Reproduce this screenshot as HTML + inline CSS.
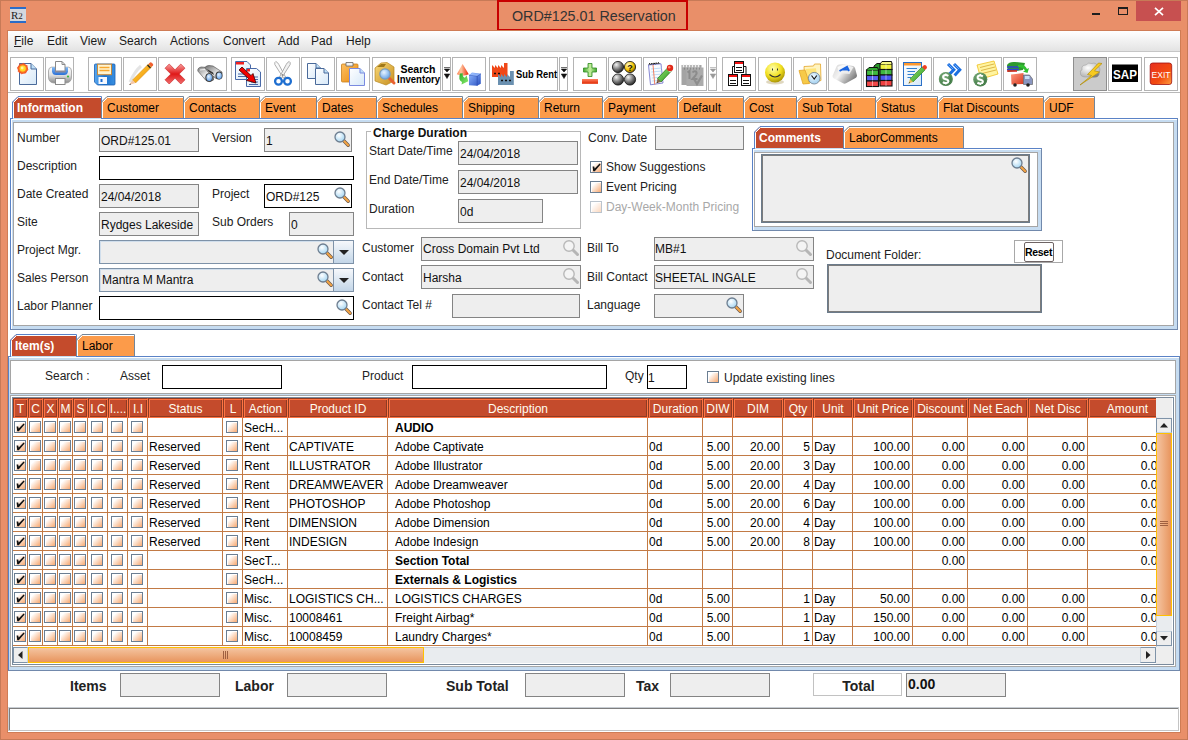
<!DOCTYPE html><html><head><meta charset="utf-8"><style>
*{margin:0;padding:0;box-sizing:border-box}
html,body{width:1188px;height:740px;overflow:hidden}
body{position:relative;background:#E98F69;font-family:"Liberation Sans", sans-serif;font-size:12px;color:#000}
div{position:absolute}
.t{position:absolute;white-space:nowrap;line-height:14px}
</style></head><body><div style="position:absolute;left:0px;top:0px;width:1188px;height:1px;background:#C77A57"></div>
<div style="position:absolute;left:0px;top:0px;width:1px;height:740px;background:#C77A57"></div>
<div style="position:absolute;left:1187px;top:0px;width:1px;height:740px;background:#C77A57"></div>
<div style="position:absolute;left:0px;top:739px;width:1188px;height:1px;background:#C77A57"></div>
<div style="position:absolute;left:497px;top:0px;width:191px;height:31px;border:2px solid #C80000"></div>
<div class="t" style="left:512px;top:8px;font-size:14.3px;color:#333;line-height:16px">ORD#125.01 Reservation</div>
<div style="position:absolute;left:10px;top:7px;width:16px;height:16px;background:#D4D8DE;border-top:2px solid #2A6CC8;border-bottom:2px solid #2A6CC8"><div class="t" style="left:1px;top:-1px;font-family:'Liberation Serif';font-size:11px;color:#222">R<span style="font-size:9px">2</span></div></div>
<div style="position:absolute;left:1092px;top:13px;width:8px;height:2px;background:#1E1E1E"></div>
<div style="position:absolute;left:1118px;top:7px;width:10px;height:8px;border:1px solid #1E1E1E;border-top-width:2px"></div>
<div style="position:absolute;left:1136px;top:1px;width:45px;height:20px;background:#C75050"></div>
<svg style="position:absolute;left:1154px;top:7px" width="10" height="9"><path d="M1 0.8L9 8.2M9 0.8L1 8.2" stroke="#fff" stroke-width="1.7"/></svg>
<div style="position:absolute;left:7px;top:30px;width:1174px;height:703px;border:1px solid #CF7C55;background:#fff"></div>
<div style="position:absolute;left:8px;top:31px;width:1172px;height:20px;background:linear-gradient(#FFFFFF,#E3E3E3)"></div>
<div style="position:absolute;left:8px;top:51px;width:1172px;height:1px;background:#C6C6C6"></div>
<div class="t" style="left:14px;top:34px;font-size:12px;color:#1a1a1a"><u>F</u>ile</div>
<div class="t" style="left:47px;top:34px;font-size:12px;color:#1a1a1a">Edit</div>
<div class="t" style="left:80px;top:34px;font-size:12px;color:#1a1a1a">View</div>
<div class="t" style="left:119px;top:34px;font-size:12px;color:#1a1a1a">Search</div>
<div class="t" style="left:170px;top:34px;font-size:12px;color:#1a1a1a">Actions</div>
<div class="t" style="left:223px;top:34px;font-size:12px;color:#1a1a1a">Convert</div>
<div class="t" style="left:278px;top:34px;font-size:12px;color:#1a1a1a">Add</div>
<div class="t" style="left:311px;top:34px;font-size:12px;color:#1a1a1a">Pad</div>
<div class="t" style="left:346px;top:34px;font-size:12px;color:#1a1a1a">Help</div>
<div style="position:absolute;left:8px;top:92px;width:1172px;height:1px;background:#B8B8B8"></div>
<svg width="0" height="0" style="position:absolute"><defs>
<linearGradient id="gPage" x1="0" y1="0" x2="1" y2="1"><stop offset="0" stop-color="#FFFFFF"/><stop offset="1" stop-color="#D6E8F8"/></linearGradient>
<radialGradient id="gBurst"><stop offset="0" stop-color="#FFF04A"/><stop offset="0.45" stop-color="#FFC21E"/><stop offset="0.75" stop-color="#F04020"/><stop offset="1" stop-color="#F04020" stop-opacity="0"/></radialGradient>
<linearGradient id="gPrinter" x1="0" y1="0" x2="0" y2="1"><stop offset="0" stop-color="#FFFFFF"/><stop offset="0.5" stop-color="#E0E0E0"/><stop offset="1" stop-color="#8A8A8A"/></linearGradient>
<linearGradient id="gBlue" x1="0" y1="0" x2="0" y2="1"><stop offset="0" stop-color="#7FB8F5"/><stop offset="1" stop-color="#2A6FD6"/></linearGradient>
<linearGradient id="gFloppy" x1="0" y1="0" x2="1" y2="0"><stop offset="0" stop-color="#58A8F0"/><stop offset="0.5" stop-color="#1A72D0"/><stop offset="1" stop-color="#3A90E0"/></linearGradient>
<linearGradient id="gRedX" x1="0" y1="0" x2="0" y2="1"><stop offset="0" stop-color="#F8A0A0"/><stop offset="0.5" stop-color="#E01818"/><stop offset="1" stop-color="#F07070"/></linearGradient>
<linearGradient id="gGray" x1="0" y1="0" x2="0" y2="1"><stop offset="0" stop-color="#9A9A9A"/><stop offset="0.5" stop-color="#5A5A5A"/><stop offset="1" stop-color="#3A3A3A"/></linearGradient>
<radialGradient id="gLens" cx="0.4" cy="0.35" r="0.7"><stop offset="0" stop-color="#E8F4FF"/><stop offset="1" stop-color="#5E9EE8"/></radialGradient>
<linearGradient id="gOrange" x1="0" y1="0" x2="1" y2="1"><stop offset="0" stop-color="#FFC060"/><stop offset="1" stop-color="#E88A10"/></linearGradient>
<linearGradient id="gBox" x1="0" y1="0" x2="1" y2="1"><stop offset="0" stop-color="#F8D878"/><stop offset="1" stop-color="#C89020"/></linearGradient>
<radialGradient id="gBall" cx="0.35" cy="0.3" r="0.75"><stop offset="0" stop-color="#F4F4F4"/><stop offset="0.6" stop-color="#707070"/><stop offset="1" stop-color="#202020"/></radialGradient>
<radialGradient id="gBallY" cx="0.35" cy="0.3" r="0.75"><stop offset="0" stop-color="#FFF8C0"/><stop offset="0.6" stop-color="#F5C400"/><stop offset="1" stop-color="#806000"/></radialGradient>
<radialGradient id="gSmile" cx="0.4" cy="0.3" r="0.75"><stop offset="0" stop-color="#FFFFB0"/><stop offset="0.55" stop-color="#F2E020"/><stop offset="1" stop-color="#A08A00"/></radialGradient>
<linearGradient id="gFolder" x1="0" y1="0" x2="1" y2="1"><stop offset="0" stop-color="#FFF2B8"/><stop offset="1" stop-color="#F2C040"/></linearGradient>
<linearGradient id="gKey" x1="0" y1="0" x2="0" y2="1"><stop offset="0" stop-color="#FFFFFF"/><stop offset="1" stop-color="#A8A8A8"/></linearGradient>
<radialGradient id="gCoin" cx="0.4" cy="0.35" r="0.7"><stop offset="0" stop-color="#7FB07F"/><stop offset="1" stop-color="#2F6A35"/></radialGradient>
<linearGradient id="gTruck" x1="0" y1="0" x2="1" y2="1"><stop offset="0" stop-color="#FF9A80"/><stop offset="1" stop-color="#D83A20"/></linearGradient>
<radialGradient id="gCloud" cx="0.4" cy="0.35" r="0.7"><stop offset="0" stop-color="#FFFFFF"/><stop offset="1" stop-color="#B0B0B0"/></radialGradient>
<linearGradient id="gExit" x1="0" y1="0" x2="1" y2="1"><stop offset="0" stop-color="#E83020"/><stop offset="0.6" stop-color="#F24A10"/><stop offset="1" stop-color="#FFA040"/></linearGradient>
<linearGradient id="gGreen" x1="0" y1="0" x2="1" y2="0"><stop offset="0" stop-color="#40A830"/><stop offset="0.5" stop-color="#C8F0A0"/><stop offset="1" stop-color="#40A830"/></linearGradient>
<linearGradient id="gMinus" x1="0" y1="0" x2="0" y2="1"><stop offset="0" stop-color="#FF8060"/><stop offset="1" stop-color="#E02800"/></linearGradient>
<linearGradient id="gCube" x1="0" y1="0" x2="1" y2="1"><stop offset="0" stop-color="#90B8FF"/><stop offset="1" stop-color="#2850C0"/></linearGradient>
<linearGradient id="gCone" x1="0" y1="0" x2="1" y2="1"><stop offset="0" stop-color="#FFB090"/><stop offset="1" stop-color="#E02800"/></linearGradient>
<linearGradient id="gPencil" x1="0" y1="0" x2="1" y2="1"><stop offset="0" stop-color="#FFD040"/><stop offset="1" stop-color="#F09000"/></linearGradient>
<linearGradient id="gGPencil" x1="0" y1="0" x2="1" y2="1"><stop offset="0" stop-color="#90E070"/><stop offset="1" stop-color="#2E9A20"/></linearGradient>
<linearGradient id="gBinoL" x1="0" y1="0" x2="1" y2="1"><stop offset="0" stop-color="#808080"/><stop offset="0.5" stop-color="#E8E8E8"/><stop offset="1" stop-color="#606060"/></linearGradient>
<linearGradient id="gBinoR" x1="0" y1="0" x2="1" y2="1"><stop offset="0" stop-color="#707070"/><stop offset="0.6" stop-color="#E0E0E0"/><stop offset="1" stop-color="#505050"/></linearGradient>
<radialGradient id="gClock" cx="0.4" cy="0.35" r="0.7"><stop offset="0" stop-color="#F0FAFF"/><stop offset="1" stop-color="#9CCCEE"/></radialGradient>
<linearGradient id="gKeyS" x1="0" y1="0" x2="1" y2="0.6"><stop offset="0" stop-color="#D0D0D0"/><stop offset="0.45" stop-color="#F4F4F4"/><stop offset="1" stop-color="#7A7A7A"/></linearGradient>
<linearGradient id="gKeyT" x1="0" y1="0" x2="1" y2="1"><stop offset="0" stop-color="#FFFFFF"/><stop offset="1" stop-color="#E4E4E4"/></linearGradient>
<radialGradient id="gBurst2"><stop offset="0" stop-color="#FFD820"/><stop offset="0.5" stop-color="#FF9A20"/><stop offset="1" stop-color="#F03A20" stop-opacity="0.75"/></radialGradient>
<linearGradient id="gCone2" x1="0" y1="0" x2="1" y2="0"><stop offset="0" stop-color="#FF8050"/><stop offset="0.35" stop-color="#FFC8A0"/><stop offset="1" stop-color="#E82000"/></linearGradient>
<linearGradient id="gArrow" x1="0" y1="0" x2="1" y2="1"><stop offset="0" stop-color="#28A828"/><stop offset="1" stop-color="#90F070"/></linearGradient>
</defs></svg>
<div style="position:absolute;left:10px;top:57px;width:34px;height:34px;background:#FFFFFF;border:1px solid #B4B4B4"></div>
<svg style="position:absolute;left:10px;top:57px" width="34" height="34" viewBox="0 0 34 34"><path d="M9.5 6.5H21L26.5 12V27.5H9.5Z" fill="url(#gPage)" stroke="#4A6A9A"/><path d="M21 6.5V12H26.5" fill="#BFE0F8" stroke="#4A6A9A"/><circle cx="12.7" cy="11.6" r="5.2" fill="#F04A28"/><polygon points="18.58,12.79 16.52,14.17 16.02,16.60 13.58,16.11 11.51,17.48 10.13,15.42 7.70,14.92 8.19,12.48 6.82,10.41 8.88,9.03 9.38,6.60 11.82,7.09 13.89,5.72 15.27,7.78 17.70,8.28 17.21,10.72" fill="url(#gBurst2)" opacity="0.85"/><circle cx="12.7" cy="11.6" r="3" fill="#FFD828"/><circle cx="12.2" cy="11" r="1.4" fill="#FFF6A0"/></svg>
<div style="position:absolute;left:45px;top:57px;width:29px;height:34px;background:#FFFFFF;border:1px solid #B4B4B4"></div>
<svg style="position:absolute;left:45px;top:57px" width="29" height="34" viewBox="0 0 29 34"><path d="M3.5 14 Q3.5 10.5 6.5 10.2 H23.5 Q26.5 10.5 26.5 14 V20 Q26.5 25.5 21 26 H9 Q3.5 25.5 3.5 20Z" fill="url(#gPrinter)" stroke="#9A9A9A" stroke-width="0.8"/><path d="M7 10.3 H23 V14.5 Q22.5 18 19 18 H11 Q7.5 18 7 14.5Z" fill="url(#gBlue)"/><path d="M10.5 4.5H17L20 7.5V14.5H10.5Z" fill="#fff" stroke="#8A8A8A"/><path d="M17 4.5V7.5H20" fill="none" stroke="#8A8A8A"/><rect x="10" y="13.5" width="10.5" height="2" fill="#8A8A9A"/><rect x="10.5" y="21.5" width="9.5" height="6" fill="#fff" stroke="#8A8A8A"/><circle cx="23" cy="19.5" r="1" fill="#2CB82C"/></svg>
<div style="position:absolute;left:88px;top:57px;width:34px;height:34px;background:#FFFFFF;border:1px solid #B4B4B4"></div>
<svg style="position:absolute;left:88px;top:57px" width="34" height="34" viewBox="0 0 34 34"><path d="M6.5 8Q6.5 7 7.5 7H26Q27 7 27 8V27Q27 28 26 28H9.5L6.5 25Z" fill="url(#gFloppy)" stroke="#1A5EB0" stroke-width="0.8"/><rect x="9.5" y="7.2" width="14" height="10.5" fill="#FFF4D0" stroke="#C88A3A"/><path d="M11.5 10.5H21.5M11.5 13.5H21.5" stroke="#F8A830" stroke-width="1.6"/><rect x="10.5" y="20" width="8.5" height="7" fill="#F4F8FF"/><rect x="12.5" y="22" width="2" height="3" fill="#1A6AD0"/></svg>
<div style="position:absolute;left:123px;top:57px;width:34px;height:34px;background:#FFFFFF;border:1px solid #B4B4B4"></div>
<svg style="position:absolute;left:123px;top:57px" width="34" height="34" viewBox="0 0 34 34"><path d="M7 25 Q12 14 18 9" stroke="#D8D8D8" stroke-width="3" fill="none" opacity="0.7"/><path d="M9.5 23 L25.5 7 L28.5 10 L12.5 26 Z" fill="url(#gPencil)" stroke="#D08000" stroke-width="0.5"/><path d="M9.5 23 L12.5 26 L6 28 Z" fill="#F4C8A8"/><path d="M6 28 L7.5 26.5 L8 27.5Z" fill="#333"/><path d="M25.5 7 L27 5.5 Q28 5 29 6 L30 7 Q30.5 8 30 8.5 L28.5 10Z" fill="#F06030"/><path d="M24.5 8 L27.5 11" stroke="#222" stroke-width="1.2"/></svg>
<div style="position:absolute;left:158px;top:57px;width:34px;height:34px;background:#FFFFFF;border:1px solid #B4B4B4"></div>
<svg style="position:absolute;left:158px;top:57px" width="34" height="34" viewBox="0 0 34 34"><path d="M7 11.2L11.2 7L17 12.8L22.8 7L27 11.2L21.2 17L27 22.8L22.8 27L17 21.2L11.2 27L7 22.8L12.8 17Z" fill="url(#gRedX)" stroke="#C82020" stroke-width="0.6"/></svg>
<div style="position:absolute;left:193px;top:57px;width:34px;height:34px;background:#FFFFFF;border:1px solid #B4B4B4"></div>
<svg style="position:absolute;left:193px;top:57px" width="34" height="34" viewBox="0 0 34 34"><path d="M4.8 14 Q4.5 10.5 8.5 10 L14 10.5 L21 16.5 L20.5 23 Q17 26 13 23.5 Z" fill="url(#gBinoL)" stroke="#444" stroke-width="0.6"/><path d="M12 10.5 Q13 8.5 16 8.5 L20 9 L29 15 L29 20.5 Q27 23 23 21.5 L15 15Z" fill="url(#gBinoR)" stroke="#444" stroke-width="0.6"/><path d="M14 12 L20 15.5 L21 18 L16 15Z" fill="#333"/><path d="M7 13 L12 12.5" stroke="#F0F0F0" stroke-width="1"/><ellipse cx="16" cy="20.5" rx="3.6" ry="4.3" fill="#333"/><ellipse cx="26" cy="18.6" rx="3.4" ry="4" fill="#333"/><ellipse cx="16.2" cy="20.6" rx="2.8" ry="3.5" fill="url(#gLens)"/><ellipse cx="26.2" cy="18.7" rx="2.6" ry="3.2" fill="url(#gLens)"/></svg>
<div style="position:absolute;left:231px;top:57px;width:34px;height:34px;background:#FFFFFF;border:1px solid #B4B4B4"></div>
<svg style="position:absolute;left:231px;top:57px" width="34" height="34" viewBox="0 0 34 34"><path d="M4.5 4.5H16L19.5 8V22.5H4.5Z" fill="url(#gPage)" stroke="#4A6AA8"/><rect x="5" y="5" width="8" height="2.5" fill="#F02020"/><path d="M7 17H16M7 19.5H16" stroke="#4A6AA8"/><path d="M15.5 11.5H25.5L29.5 15V29.5H15.5Z" fill="url(#gPage)" stroke="#4A6AA8"/><rect x="16" y="12" width="3" height="2.5" fill="#F02020"/><path d="M20 20H27M20 22.5H27M20 25H27M18 27.5H27" stroke="#4A6AA8"/><path d="M8 13 L11 10 L20 18.5 L22 16.5 L25 26 L15.5 23.5 L17.5 21.5Z" fill="#F00000" stroke="#300" stroke-width="0.8"/></svg>
<div style="position:absolute;left:266px;top:57px;width:34px;height:34px;background:#FFFFFF;border:1px solid #B4B4B4"></div>
<svg style="position:absolute;left:266px;top:57px" width="34" height="34" viewBox="0 0 34 34"><path d="M9.8 4.5 Q12 5.5 12.8 7.5 L19.5 20 L17.5 21.2 L8.8 7.5 Q8.4 5 9.8 4.5Z" fill="#FAFAFA" stroke="#A4A4A4" stroke-width="0.9" stroke-linejoin="round"/><path d="M23.2 4.5 Q21 5.5 20.2 7.5 L13.5 20 L15.5 21.2 L24.2 7.5 Q24.6 5 23.2 4.5Z" fill="#F2F2F2" stroke="#A4A4A4" stroke-width="0.9" stroke-linejoin="round"/><circle cx="16.5" cy="18" r="0.9" fill="#888"/><circle cx="12.5" cy="24.3" r="3.4" fill="none" stroke="#1E6ED0" stroke-width="2.3"/><circle cx="21.5" cy="24.3" r="3.4" fill="none" stroke="#1E6ED0" stroke-width="2.3"/></svg>
<div style="position:absolute;left:301px;top:57px;width:34px;height:34px;background:#FFFFFF;border:1px solid #B4B4B4"></div>
<svg style="position:absolute;left:301px;top:57px" width="34" height="34" viewBox="0 0 34 34"><path d="M6.5 6.5H15L19.5 11V21.5H6.5Z" fill="url(#gPage)" stroke="#4A6A9A"/><path d="M15 6.5V11H19.5" fill="#BFE0F8" stroke="#4A6A9A"/><path d="M14.5 11.5H23L27.5 16V27.5H14.5Z" fill="url(#gPage)" stroke="#4A6A9A"/><path d="M23 11.5V16H27.5" fill="#BFE0F8" stroke="#4A6A9A"/></svg>
<div style="position:absolute;left:336px;top:57px;width:34px;height:34px;background:#FFFFFF;border:1px solid #B4B4B4"></div>
<svg style="position:absolute;left:336px;top:57px" width="34" height="34" viewBox="0 0 34 34"><rect x="5.5" y="7" width="16.5" height="18" rx="1" fill="url(#gOrange)" stroke="#C88020" stroke-width="0.8"/><path d="M10 5.5H17V9H10Z" fill="#F2F2F2" stroke="#666" stroke-width="0.8"/><path d="M13.5 11.5H24L28.5 16V28.5H13.5Z" fill="url(#gPage)" stroke="#7A8AE0"/><path d="M24 11.5V16H28.5" fill="#BFE0F8" stroke="#7A8AE0"/></svg>
<div style="position:absolute;left:372px;top:57px;width:69px;height:34px;background:#FFFFFF;border:1px solid #B4B4B4"></div>
<svg style="position:absolute;left:372px;top:57px" width="69" height="34" viewBox="0 0 69 34"><path d="M3 11 L9 6 L15 5.5 L22 10 V24 L14 28 L3 24Z" fill="url(#gBox)" stroke="#B88820" stroke-width="0.7"/><path d="M5 10 L9 7 L14 7 L12 10Z" fill="#A07818"/><path d="M17 21 L22 26" stroke="#E86030" stroke-width="3" stroke-linecap="round"/><circle cx="13" cy="17" r="5.2" fill="url(#gLens)" stroke="#7C9CB8" stroke-width="1.2"/><text x="46" y="15.5" text-anchor="middle" font-family="Liberation Sans" font-weight="bold" font-size="10.5" fill="#000">Search</text><text x="46.5" y="25.6" text-anchor="middle" font-family="Liberation Sans" font-weight="bold" font-size="10.5" fill="#000" textLength="43" lengthAdjust="spacingAndGlyphs">Inventory</text></svg>
<div style="position:absolute;left:442px;top:57px;width:9px;height:34px;background:#FFFFFF;border:1px solid #B4B4B4"></div>
<svg style="position:absolute;left:442px;top:57px" width="9" height="34" viewBox="0 0 9 34"><path d="M2 10.5H8 M2.3 12H7.7L5 15Z M2.3 17H7.7L5 21.5Z" fill="#111" stroke="#111" stroke-width="0.6"/></svg>
<div style="position:absolute;left:452px;top:57px;width:34px;height:34px;background:#FFFFFF;border:1px solid #B4B4B4"></div>
<svg style="position:absolute;left:452px;top:57px" width="34" height="34" viewBox="0 0 34 34"><path d="M10.6 7 L16.8 17.3 Q10.8 20 4.8 17.3Z" fill="url(#gCone2)"/><path d="M8 16.5 Q5.8 23 10 25 L9.5 27.5 L16.3 24.3 L14.5 18.3 L13 20.8 Q10.2 20 10.8 16.2Z" fill="url(#gArrow)"/><path d="M17 18.2 L20 15.6 L28.8 16.8 L28.8 26.8 L25 28.8 L17 28.3Z" fill="url(#gCube)"/><path d="M17 18.2 L25.2 19 L28.8 16.8 M25.2 19 V28.8" stroke="#2A4AB0" stroke-width="0.7" fill="none"/><path d="M17.5 18.3 L20.2 16 L28.3 17 L25 18.9Z" fill="#9CC0FF" opacity="0.7"/></svg>
<div style="position:absolute;left:489px;top:57px;width:69px;height:34px;background:#FFFFFF;border:1px solid #B4B4B4"></div>
<svg style="position:absolute;left:489px;top:57px" width="69" height="34" viewBox="0 0 69 34"><path d="M3 20V8L6 11V8L9 11V8L12 11V8L15 11V6H18.5V20Z" fill="#F04818"/><path d="M9 28V17L12 20V17L15 20V17L18 20V17L21 20V14H24.8V28Z" fill="#6A90B0"/><path d="M12 23.5H14M16 23.5H18M20 23.5H22 M5 16.5H7M9 16.5H11" stroke="#111" stroke-width="1.6"/><text x="47.5" y="21" text-anchor="middle" font-family="Liberation Sans" font-weight="bold" font-size="10.5" fill="#000" textLength="41" lengthAdjust="spacingAndGlyphs">Sub Rent</text></svg>
<div style="position:absolute;left:559px;top:57px;width:9px;height:34px;background:#FFFFFF;border:1px solid #B4B4B4"></div>
<svg style="position:absolute;left:559px;top:57px" width="9" height="34" viewBox="0 0 9 34"><path d="M2 10.5H8 M2.3 12H7.7L5 15Z M2.3 17H7.7L5 21.5Z" fill="#111" stroke="#111" stroke-width="0.6"/></svg>
<div style="position:absolute;left:573px;top:57px;width:34px;height:34px;background:#FFFFFF;border:1px solid #B4B4B4"></div>
<svg style="position:absolute;left:573px;top:57px" width="34" height="34" viewBox="0 0 34 34"><path d="M15 6.5H19V11H23.5V15H19V19.5H15V15H10.5V11H15Z" fill="url(#gGreen)" stroke="#2E8A20" stroke-width="0.8"/><rect x="9" y="22" width="16" height="4.8" fill="url(#gMinus)"/></svg>
<div style="position:absolute;left:608px;top:57px;width:34px;height:34px;background:#FFFFFF;border:1px solid #B4B4B4"></div>
<svg style="position:absolute;left:608px;top:57px" width="34" height="34" viewBox="0 0 34 34"><circle cx="10" cy="10" r="5.6" fill="url(#gBall)" stroke="#111" stroke-width="0.8"/><circle cx="22" cy="10" r="5.6" fill="url(#gBallY)" stroke="#111" stroke-width="0.8"/><circle cx="10" cy="22.5" r="5.6" fill="url(#gBall)" stroke="#111" stroke-width="0.8"/><circle cx="22" cy="22.5" r="5.6" fill="url(#gBall)" stroke="#111" stroke-width="0.8"/><text x="22" y="13.5" text-anchor="middle" font-family="Liberation Sans" font-weight="bold" font-size="9" fill="#111">?</text></svg>
<div style="position:absolute;left:643px;top:57px;width:34px;height:34px;background:#FFFFFF;border:1px solid #B4B4B4"></div>
<svg style="position:absolute;left:643px;top:57px" width="34" height="34" viewBox="0 0 34 34"><path d="M5.5 8 L18 6.8 L20 26 L7.5 27.8Z" fill="#F8FBFF" stroke="#6A6AC8" stroke-width="0.8"/><path d="M8 12L19 11 M8.3 15L19.3 14 M8.6 18L19.6 17 M8.9 21L19.9 20 M9.2 24L20.2 23" stroke="#A8D0F0" stroke-width="0.7"/><path d="M10 8 L11.8 27.5" stroke="#F07050" stroke-width="0.9"/><path d="M6 7.8 Q6.5 5 7.5 7.5 M8.2 7.6 Q8.7 4.8 9.7 7.3 M10.4 7.4 Q10.9 4.6 11.9 7.1 M12.6 7.2 Q13.1 4.4 14.1 6.9 M14.8 7 Q15.3 4.2 16.3 6.7" stroke="#111" stroke-width="1" fill="none"/><path d="M14.5 21.5 L24.5 11 L28 14.5 L18 25 Z" fill="url(#gGPencil)" stroke="#1E6A10" stroke-width="0.7"/><path d="M14.5 21.5 L18 25 L13.5 26.2Z" fill="#8A6A50"/><path d="M13.5 26.2 L14.2 24.8 L14.9 25.6Z" fill="#222"/><path d="M24 11.5 L27.5 15" stroke="#F0F0F0" stroke-width="1.4"/><circle cx="27" cy="11" r="3.2" fill="#E02818"/><circle cx="26.2" cy="10.2" r="1.2" fill="#FF8A70"/></svg>
<div style="position:absolute;left:678px;top:57px;width:29px;height:34px;background:#FFFFFF;border:1px solid #B4B4B4"></div>
<svg style="position:absolute;left:678px;top:57px" width="29" height="34" viewBox="0 0 29 34"><rect x="3.5" y="8" width="20" height="20" fill="#A4A4A4"/><rect x="8.5" y="10.5" width="17" height="18.5" fill="#ABABAB"/><path d="M5.5 7.5V10.5 M8.5 7.5V10.5 M11.5 7.5V10.5 M14.5 7.5V10.5 M17.5 7.5V10.5 M20.5 7.5V10.5" stroke="#F0F0F0" stroke-width="1.6"/><path d="M6 10.5 Q7 12 6.5 12.5 M9 10.5 Q10 12 9.5 12.5 M12 10.5 Q13 12 12.5 12.5 M15 10.5 Q16 12 15.5 12.5 M18 10.5 Q19 12 18.5 12.5 M21 10.5 Q22 12 21.5 12.5" stroke="#7A7A7A" stroke-width="0.8" fill="none"/><path d="M9.5 15.5 L11.5 14 V22 M14.5 15.5 Q16 13.5 18 14.5 Q19.5 16 17.5 18.5 L14.5 22 H19.5" stroke="#8C8C8C" stroke-width="2" fill="none"/><path d="M15.5 21 L19 27 L24 18.5" stroke="#8E8E8E" stroke-width="2.2" fill="none"/></svg>
<div style="position:absolute;left:708px;top:57px;width:9px;height:34px;background:#FFFFFF;border:1px solid #B4B4B4"></div>
<svg style="position:absolute;left:708px;top:57px" width="9" height="34" viewBox="0 0 9 34"><path d="M2 10.5H8 M2.3 12H7.7L5 15Z M2.3 17H7.7L5 21.5Z" fill="#9A9A9A" stroke="#9A9A9A" stroke-width="0.6"/></svg>
<div style="position:absolute;left:722px;top:57px;width:34px;height:34px;background:#FFFFFF;border:1px solid #B4B4B4"></div>
<svg style="position:absolute;left:722px;top:57px" width="34" height="34" viewBox="0 0 34 34"><path d="M10.5 17V9.5H13 M24 17V9.5H21.5" stroke="#111" fill="none"/><rect x="12.5" y="4.5" width="9" height="11" fill="#fff" stroke="#111"/><rect x="13" y="5" width="8" height="2" fill="#F01010"/><path d="M14 10.5H20M14 13.5H20" stroke="#111" stroke-width="1.1"/><rect x="6.5" y="17.5" width="9" height="11" fill="#fff" stroke="#111"/><rect x="7" y="18" width="8" height="2" fill="#F01010"/><path d="M8 23.5H14M8 26.5H14" stroke="#111" stroke-width="1.1"/><rect x="19.5" y="17.5" width="9" height="11" fill="#fff" stroke="#111"/><rect x="20" y="18" width="8" height="2" fill="#F01010"/><path d="M21 23.5H27M21 26.5H27" stroke="#111" stroke-width="1.1"/></svg>
<div style="position:absolute;left:758px;top:57px;width:34px;height:34px;background:#FFFFFF;border:1px solid #B4B4B4"></div>
<svg style="position:absolute;left:758px;top:57px" width="34" height="34" viewBox="0 0 34 34"><ellipse cx="17" cy="25" rx="9" ry="2.5" fill="#C0B080" opacity="0.5"/><circle cx="17" cy="15.5" r="10" fill="url(#gSmile)"/><path d="M14.5 11.5V13.5 M19.5 11.5V13.5" stroke="#333" stroke-width="1"/><path d="M11.5 17.5 Q17 22.5 22.5 17.5" stroke="#333" stroke-width="1.1" fill="none"/></svg>
<div style="position:absolute;left:793px;top:57px;width:34px;height:34px;background:#FFFFFF;border:1px solid #B4B4B4"></div>
<svg style="position:absolute;left:793px;top:57px" width="34" height="34" viewBox="0 0 34 34"><path d="M11 9.5 L20.5 9 L21.5 7 L27.5 7 L28 23.5 L12 26.5Z" fill="#FFF4C0" stroke="#E3A628" stroke-width="0.8"/><path d="M12.5 12 L23 11.2 L24.5 25 L13.5 26.3Z" fill="#FFE57A"/><path d="M6 13.5 L12 13 L16.5 26.5 L10 27Z" fill="#F6CA48" stroke="#E3A628" stroke-width="0.8"/><circle cx="21.2" cy="21.2" r="5.8" fill="url(#gClock)" stroke="#7A8A9A" stroke-width="0.9"/><path d="M18.5 18.5 L21.2 22 L23.8 18.5" stroke="#111" stroke-width="1.1" fill="none"/></svg>
<div style="position:absolute;left:828px;top:57px;width:34px;height:34px;background:#FFFFFF;border:1px solid #B4B4B4"></div>
<svg style="position:absolute;left:828px;top:57px" width="34" height="34" viewBox="0 0 34 34"><path d="M4.5 19 L8.5 9.5 Q9 8 11 7.5 L15.5 7 L25 9 Q26.5 9.5 27 11 L29 18.5 Q29 20 27.5 21 L18 26.3 Q16.5 27 15 26.3 L6 21.5 Q4.5 20.5 4.5 19Z" fill="url(#gKeyS)"/><path d="M9.5 10 L15.5 7.8 L25.5 10 L21.5 17 L11 16Z" fill="url(#gKeyT)"/><path d="M11.5 14 L19 9.8 L21 14 M14.5 12.6 H20" stroke="#1A64E0" stroke-width="2" fill="none"/></svg>
<div style="position:absolute;left:863px;top:57px;width:34px;height:34px;background:#FFFFFF;border:1px solid #B4B4B4"></div>
<svg style="position:absolute;left:863px;top:57px" width="34" height="34" viewBox="0 0 34 34"><path d="M11 9 L14 6.5 H20 L20 24 L11 24Z" fill="#2A9A2A" stroke="#111" stroke-width="1"/><rect x="17" y="7.0" width="12" height="5.5" fill="#F0F040" stroke="#111" stroke-width="1.1"/><path d="M23 7.0V12.5" stroke="#fff" stroke-opacity="0.6" stroke-width="0.8"/><rect x="17" y="12.5" width="12" height="5.5" fill="#40B840" stroke="#111" stroke-width="1.1"/><path d="M23 12.5V18.0" stroke="#fff" stroke-opacity="0.6" stroke-width="0.8"/><rect x="17" y="18.0" width="12" height="5.5" fill="#4A58F0" stroke="#111" stroke-width="1.1"/><path d="M23 18.0V23.5" stroke="#fff" stroke-opacity="0.6" stroke-width="0.8"/><rect x="17" y="23.5" width="12" height="5.5" fill="#F04040" stroke="#111" stroke-width="1.1"/><path d="M23 23.5V29.0" stroke="#fff" stroke-opacity="0.6" stroke-width="0.8"/><path d="M17 7 L19 4.5 H28.5 L29 7" fill="#F8F880" stroke="#111" stroke-width="1"/><rect x="3.5" y="13.0" width="12" height="5.5" fill="#40B840" stroke="#111" stroke-width="1.1"/><path d="M9.5 13.0V18.5" stroke="#fff" stroke-opacity="0.6" stroke-width="0.8"/><rect x="3.5" y="18.5" width="12" height="5.5" fill="#5A60F0" stroke="#111" stroke-width="1.1"/><path d="M9.5 18.5V24.0" stroke="#fff" stroke-opacity="0.6" stroke-width="0.8"/><rect x="3.5" y="24.0" width="12" height="5.5" fill="#F04848" stroke="#111" stroke-width="1.1"/><path d="M9.5 24.0V29.5" stroke="#fff" stroke-opacity="0.6" stroke-width="0.8"/><path d="M3.5 13 L6 10.5 H14.5 L15.5 13" fill="#30A830" stroke="#111" stroke-width="1"/></svg>
<div style="position:absolute;left:898px;top:57px;width:34px;height:34px;background:#FFFFFF;border:1px solid #B4B4B4"></div>
<svg style="position:absolute;left:898px;top:57px" width="34" height="34" viewBox="0 0 34 34"><rect x="5.5" y="5.5" width="18" height="23" fill="url(#gPage)" stroke="#2A70C8"/><rect x="6" y="6" width="17" height="2.5" fill="#FF9A30"/><path d="M8.5 11.5H19M9.5 14.5H17M9.5 17.5H16M9.5 20.5H13" stroke="#3080D0" stroke-width="1"/><path d="M12 22 L24 10 L27 13 L15 25Z" fill="url(#gGPencil)" stroke="#2A7A1A" stroke-width="0.6"/><path d="M12 22 L15 25 L10.5 26.5Z" fill="#E8C050"/><path d="M10.5 26.5 L11.5 25 L12 26Z" fill="#222"/><path d="M24 10 L25.5 8.5 Q27 7.5 28.5 9 Q29.5 10.5 28.5 11.5 L27 13Z" fill="#F04020"/></svg>
<div style="position:absolute;left:933px;top:57px;width:34px;height:34px;background:#FFFFFF;border:1px solid #B4B4B4"></div>
<svg style="position:absolute;left:933px;top:57px" width="34" height="34" viewBox="0 0 34 34"><path d="M15 7 L20.8 12.8 L16 17.6" stroke="#1A6EE0" stroke-width="3" fill="none" stroke-linejoin="miter"/><path d="M21 7 L26.8 12.8 L21.6 18.6" stroke="#1A6EE0" stroke-width="3" fill="none" stroke-linejoin="miter"/><path d="M15.5 7.5 L20 12" stroke="#7AB8FF" stroke-width="0.8"/><path d="M21.5 7.5 L26 12" stroke="#7AB8FF" stroke-width="0.8"/><circle cx="12.8" cy="22" r="7" fill="url(#gCoin)"/><circle cx="12.8" cy="22" r="6.3" fill="none" stroke="#8CBF8C" stroke-width="0.5" opacity="0.6"/><path d="M15.4 18.8 Q13.8 17.8 12.0 18.1 Q9.8 18.6 10.200000000000001 20.6 Q10.600000000000001 21.8 12.8 22.3 Q15.600000000000001 22.9 15.4 24.6 Q15.0 26.2 12.8 26.1 Q11.200000000000001 26.1 9.9 25.1" stroke="#fff" stroke-width="2" fill="none"/><path d="M12.8 16.4V18.4M12.8 25.8V27.6" stroke="#fff" stroke-width="1.4"/></svg>
<div style="position:absolute;left:968px;top:57px;width:34px;height:34px;background:#FFFFFF;border:1px solid #B4B4B4"></div>
<svg style="position:absolute;left:968px;top:57px" width="34" height="34" viewBox="0 0 34 34"><path d="M9 8 L26 4 L30 17 L13 22Z" fill="#FFF4A0" stroke="#F0C020" stroke-width="0.8"/><path d="M12 10.5L26 7 M13 13.5L27 10 M14 16.5L28 13" stroke="#D8B040" stroke-width="0.9"/><circle cx="12.3" cy="22.5" r="7" fill="url(#gCoin)"/><circle cx="12.3" cy="22.5" r="6.3" fill="none" stroke="#8CBF8C" stroke-width="0.5" opacity="0.6"/><path d="M14.9 19.3 Q13.3 18.3 11.5 18.6 Q9.3 19.1 9.700000000000001 21.1 Q10.100000000000001 22.3 12.3 22.8 Q15.100000000000001 23.4 14.9 25.1 Q14.5 26.7 12.3 26.6 Q10.700000000000001 26.6 9.4 25.6" stroke="#fff" stroke-width="2" fill="none"/><path d="M12.3 16.9V18.9M12.3 26.3V28.1" stroke="#fff" stroke-width="1.4"/></svg>
<div style="position:absolute;left:1003px;top:57px;width:34px;height:34px;background:#FFFFFF;border:1px solid #B4B4B4"></div>
<svg style="position:absolute;left:1003px;top:57px" width="34" height="34" viewBox="0 0 34 34"><path d="M4 8 Q6 4.5 12 5 L22 6 L20 13 L5 15Z" fill="#2E9A2E"/><path d="M4 10H16 M4 12.5H16" stroke="#3040D0" stroke-width="1.5"/><path d="M4 14H14" stroke="#E02020" stroke-width="1.5"/><path d="M15 8 Q21 6 24 12 L26 11 L24.5 16 L20 14.5 L22 13.5 Q20 10 15 10Z" fill="#30C030"/><path d="M8 17.5 L20.5 16 V27 L8.5 27.5Z" fill="url(#gTruck)"/><path d="M20.5 18 H26.5 L29.5 22 V27.5 H20.5Z" fill="#8A96C0" stroke="#555" stroke-width="0.6"/><rect x="22" y="19" width="4.5" height="3" fill="#C8E0F8"/><circle cx="12" cy="28" r="1.8" fill="#222"/><circle cx="25" cy="28" r="1.8" fill="#222"/></svg>
<div style="position:absolute;left:1073px;top:57px;width:34px;height:34px;background:#CBCBCB;border:1px solid #8E8E8E"></div>
<svg style="position:absolute;left:1073px;top:57px" width="34" height="34" viewBox="0 0 34 34"><path d="M9 13 Q8 8 13 8 Q15 5 19 6.5 Q23 5 24.5 9 Q28 10.5 26.5 15 Q27 19 23 19.5 L12 20 Q6.5 19.5 7.5 15 Q6 14 9 13Z" fill="url(#gCloud)" stroke="#999" stroke-width="0.5"/><path d="M18 20 Q26 22 26 16" fill="#808080"/><path d="M25.5 6 L29 6.5 L21.5 13.8 L26.5 15 L7 28 L18.5 18.5 L14.5 17.5Z" fill="#F7CA20" stroke="#A88400" stroke-width="0.6"/></svg>
<div style="position:absolute;left:1108px;top:57px;width:34px;height:34px;background:#FFFFFF;border:1px solid #B4B4B4"></div>
<svg style="position:absolute;left:1108px;top:57px" width="34" height="34" viewBox="0 0 34 34"><rect x="4" y="7.5" width="26" height="17.5" fill="#000"/><text x="17" y="21.5" text-anchor="middle" font-family="Liberation Sans" font-weight="bold" font-size="12.5" fill="#fff" textLength="24" lengthAdjust="spacingAndGlyphs">SAP</text></svg>
<div style="position:absolute;left:1144px;top:57px;width:34px;height:34px;background:#FFFFFF;border:1px solid #B4B4B4"></div>
<svg style="position:absolute;left:1144px;top:57px" width="34" height="34" viewBox="0 0 34 34"><rect x="6.2" y="6" width="21.5" height="21.5" rx="2.5" fill="url(#gExit)" stroke="#A01010" stroke-width="0.8"/><text x="17" y="21" text-anchor="middle" font-family="Liberation Sans" font-size="9.5" fill="#fff" textLength="19" lengthAdjust="spacingAndGlyphs">EXIT</text></svg>
<div style="position:absolute;left:10px;top:118px;width:1168px;height:212px;background:#C6DCF1;border-top:1px solid #5A82C6;border-left:1px solid #5A82C6;border-right:1px solid #7189AC;border-bottom:1px solid #7189AC"></div>
<div style="position:absolute;left:11px;top:119px;width:1166px;height:1px;background:#fff"></div>
<div style="position:absolute;left:11px;top:119px;width:1px;height:210px;background:#fff"></div>
<div style="position:absolute;left:13px;top:122px;width:1161px;height:204px;background:#fff;border:1px solid #A5A5A5"></div>
<svg style="position:absolute;left:0;top:0" width="1188" height="120"><path d="M13 118 V102 L18 97 H101 V118Z" fill="#C44B2C"/><path d="M13.5 118 V102.5 L18.5 97.5 H101" fill="none" stroke="#FFFFFF" stroke-width="1"/><path d="M12.5 118 V102 L18 96.5 H101.5 V118" fill="none" stroke="#5A82C6" stroke-width="1"/><rect x="13" y="118" width="88" height="1" fill="#C6DCF1"/><path d="M102 118 V102 L107 97 H183 V118Z" fill="#FC9B4A"/><path d="M102.5 118 V102.5 L107.5 97.5 H183" fill="none" stroke="#FFFFFF" stroke-width="1"/><path d="M101.5 118 V102 L107 96.5 H183.5 V118" fill="none" stroke="#728599" stroke-width="1"/><path d="M184 118 V102 L189 97 H259 V118Z" fill="#FC9B4A"/><path d="M184.5 118 V102.5 L189.5 97.5 H259" fill="none" stroke="#FFFFFF" stroke-width="1"/><path d="M183.5 118 V102 L189 96.5 H259.5 V118" fill="none" stroke="#728599" stroke-width="1"/><path d="M260 118 V102 L265 97 H316 V118Z" fill="#FC9B4A"/><path d="M260.5 118 V102.5 L265.5 97.5 H316" fill="none" stroke="#FFFFFF" stroke-width="1"/><path d="M259.5 118 V102 L265 96.5 H316.5 V118" fill="none" stroke="#728599" stroke-width="1"/><path d="M317 118 V102 L322 97 H376 V118Z" fill="#FC9B4A"/><path d="M317.5 118 V102.5 L322.5 97.5 H376" fill="none" stroke="#FFFFFF" stroke-width="1"/><path d="M316.5 118 V102 L322 96.5 H376.5 V118" fill="none" stroke="#728599" stroke-width="1"/><path d="M377 118 V102 L382 97 H462 V118Z" fill="#FC9B4A"/><path d="M377.5 118 V102.5 L382.5 97.5 H462" fill="none" stroke="#FFFFFF" stroke-width="1"/><path d="M376.5 118 V102 L382 96.5 H462.5 V118" fill="none" stroke="#728599" stroke-width="1"/><path d="M463 118 V102 L468 97 H538 V118Z" fill="#FC9B4A"/><path d="M463.5 118 V102.5 L468.5 97.5 H538" fill="none" stroke="#FFFFFF" stroke-width="1"/><path d="M462.5 118 V102 L468 96.5 H538.5 V118" fill="none" stroke="#728599" stroke-width="1"/><path d="M539 118 V102 L544 97 H602 V118Z" fill="#FC9B4A"/><path d="M539.5 118 V102.5 L544.5 97.5 H602" fill="none" stroke="#FFFFFF" stroke-width="1"/><path d="M538.5 118 V102 L544 96.5 H602.5 V118" fill="none" stroke="#728599" stroke-width="1"/><path d="M603 118 V102 L608 97 H677 V118Z" fill="#FC9B4A"/><path d="M603.5 118 V102.5 L608.5 97.5 H677" fill="none" stroke="#FFFFFF" stroke-width="1"/><path d="M602.5 118 V102 L608 96.5 H677.5 V118" fill="none" stroke="#728599" stroke-width="1"/><path d="M678 118 V102 L683 97 H743 V118Z" fill="#FC9B4A"/><path d="M678.5 118 V102.5 L683.5 97.5 H743" fill="none" stroke="#FFFFFF" stroke-width="1"/><path d="M677.5 118 V102 L683 96.5 H743.5 V118" fill="none" stroke="#728599" stroke-width="1"/><path d="M744 118 V102 L749 97 H796 V118Z" fill="#FC9B4A"/><path d="M744.5 118 V102.5 L749.5 97.5 H796" fill="none" stroke="#FFFFFF" stroke-width="1"/><path d="M743.5 118 V102 L749 96.5 H796.5 V118" fill="none" stroke="#728599" stroke-width="1"/><path d="M797 118 V102 L802 97 H875 V118Z" fill="#FC9B4A"/><path d="M797.5 118 V102.5 L802.5 97.5 H875" fill="none" stroke="#FFFFFF" stroke-width="1"/><path d="M796.5 118 V102 L802 96.5 H875.5 V118" fill="none" stroke="#728599" stroke-width="1"/><path d="M876 118 V102 L881 97 H937 V118Z" fill="#FC9B4A"/><path d="M876.5 118 V102.5 L881.5 97.5 H937" fill="none" stroke="#FFFFFF" stroke-width="1"/><path d="M875.5 118 V102 L881 96.5 H937.5 V118" fill="none" stroke="#728599" stroke-width="1"/><path d="M938 118 V102 L943 97 H1043 V118Z" fill="#FC9B4A"/><path d="M938.5 118 V102.5 L943.5 97.5 H1043" fill="none" stroke="#FFFFFF" stroke-width="1"/><path d="M937.5 118 V102 L943 96.5 H1043.5 V118" fill="none" stroke="#728599" stroke-width="1"/><path d="M1044 118 V102 L1049 97 H1094 V118Z" fill="#FC9B4A"/><path d="M1044.5 118 V102.5 L1049.5 97.5 H1094" fill="none" stroke="#FFFFFF" stroke-width="1"/><path d="M1043.5 118 V102 L1049 96.5 H1094.5 V118" fill="none" stroke="#728599" stroke-width="1"/></svg>
<div class="t" style="left:17px;top:101px;font-size:12px;font-weight:bold;color:#fff">Information</div>
<div class="t" style="left:107px;top:101px;font-size:12px;color:#000">Customer</div>
<div class="t" style="left:189px;top:101px;font-size:12px;color:#000">Contacts</div>
<div class="t" style="left:265px;top:101px;font-size:12px;color:#000">Event</div>
<div class="t" style="left:322px;top:101px;font-size:12px;color:#000">Dates</div>
<div class="t" style="left:382px;top:101px;font-size:12px;color:#000">Schedules</div>
<div class="t" style="left:468px;top:101px;font-size:12px;color:#000">Shipping</div>
<div class="t" style="left:544px;top:101px;font-size:12px;color:#000">Return</div>
<div class="t" style="left:608px;top:101px;font-size:12px;color:#000">Payment</div>
<div class="t" style="left:683px;top:101px;font-size:12px;color:#000">Default</div>
<div class="t" style="left:749px;top:101px;font-size:12px;color:#000">Cost</div>
<div class="t" style="left:802px;top:101px;font-size:12px;color:#000">Sub Total</div>
<div class="t" style="left:881px;top:101px;font-size:12px;color:#000">Status</div>
<div class="t" style="left:943px;top:101px;font-size:12px;color:#000">Flat Discounts</div>
<div class="t" style="left:1049px;top:101px;font-size:12px;color:#000">UDF</div>
<div class="t" style="left:17px;top:131px;font-size:12px;color:#222;">Number</div>
<div style="position:absolute;left:99px;top:128px;width:100px;height:24px;background:#EEEEEE;border:1px solid #848484"></div>
<div class="t" style="left:101px;top:134px;font-size:12px;color:#111;">ORD#125.01</div>
<div class="t" style="left:212px;top:131px;font-size:12px;color:#222;">Version</div>
<div style="position:absolute;left:264px;top:128px;width:88px;height:24px;background:#EEEEEE;border:1px solid #848484"></div>
<div class="t" style="left:266px;top:134px;font-size:12px;color:#111;">1</div>
<div style="left:333px;top:130px;width:18px;height:18px"><svg width="18" height="18" viewBox="0 0 18 18"><defs><radialGradient id="lg" cx="40%" cy="35%" r="65%"><stop offset="0" stop-color="#FFFFFF"/><stop offset="1" stop-color="#A6D6F2"/></radialGradient></defs><path d="M10.8 10.8L15.2 15.2" stroke="#6A5A50" stroke-width="3.4" stroke-linecap="round"/><path d="M10.8 10.8L15.2 15.2" stroke="#F4A444" stroke-width="2" stroke-linecap="round"/><circle cx="7" cy="7" r="5" fill="url(#lg)" stroke="#6E7E90" stroke-width="1.3"/></svg></div>
<div class="t" style="left:17px;top:159px;font-size:12px;color:#222;">Description</div>
<div style="position:absolute;left:99px;top:156px;width:255px;height:24px;background:#FFFFFF;border:1px solid #000"></div>
<div class="t" style="left:17px;top:187px;font-size:12px;color:#222;">Date Created</div>
<div style="position:absolute;left:99px;top:184px;width:100px;height:24px;background:#EEEEEE;border:1px solid #848484"></div>
<div class="t" style="left:101px;top:190px;font-size:12px;color:#111;">24/04/2018</div>
<div class="t" style="left:212px;top:187px;font-size:12px;color:#222;">Project</div>
<div style="position:absolute;left:264px;top:184px;width:88px;height:24px;background:#FFFFFF;border:1px solid #000"></div>
<div class="t" style="left:266px;top:190px;font-size:12px;color:#111;">ORD#125</div>
<div style="left:333px;top:186px;width:18px;height:18px"><svg width="18" height="18" viewBox="0 0 18 18"><defs><radialGradient id="lg" cx="40%" cy="35%" r="65%"><stop offset="0" stop-color="#FFFFFF"/><stop offset="1" stop-color="#A6D6F2"/></radialGradient></defs><path d="M10.8 10.8L15.2 15.2" stroke="#6A5A50" stroke-width="3.4" stroke-linecap="round"/><path d="M10.8 10.8L15.2 15.2" stroke="#F4A444" stroke-width="2" stroke-linecap="round"/><circle cx="7" cy="7" r="5" fill="url(#lg)" stroke="#6E7E90" stroke-width="1.3"/></svg></div>
<div class="t" style="left:17px;top:215px;font-size:12px;color:#222;">Site</div>
<div style="position:absolute;left:99px;top:212px;width:100px;height:24px;background:#EEEEEE;border:1px solid #848484"></div>
<div class="t" style="left:101px;top:218px;font-size:12px;color:#111;">Rydges Lakeside</div>
<div class="t" style="left:212px;top:215px;font-size:12px;color:#222;">Sub Orders</div>
<div style="position:absolute;left:289px;top:212px;width:65px;height:24px;background:#EEEEEE;border:1px solid #848484"></div>
<div class="t" style="left:291px;top:218px;font-size:12px;color:#111;">0</div>
<div class="t" style="left:17px;top:243px;font-size:12px;color:#222;">Project Mgr.</div>
<div style="position:absolute;left:99px;top:240px;width:255px;height:24px;background:#EEEEEE;border:1px solid #7E92A8;box-shadow:inset 1px 1px #D0DEEC"></div>
<div style="left:316px;top:242px;width:18px;height:18px"><svg width="18" height="18" viewBox="0 0 18 18"><defs><radialGradient id="lg" cx="40%" cy="35%" r="65%"><stop offset="0" stop-color="#FFFFFF"/><stop offset="1" stop-color="#A6D6F2"/></radialGradient></defs><path d="M10.8 10.8L15.2 15.2" stroke="#6A5A50" stroke-width="3.4" stroke-linecap="round"/><path d="M10.8 10.8L15.2 15.2" stroke="#F4A444" stroke-width="2" stroke-linecap="round"/><circle cx="7" cy="7" r="5" fill="url(#lg)" stroke="#6E7E90" stroke-width="1.3"/></svg></div>
<div style="position:absolute;left:333px;top:241px;width:20px;height:22px;background:linear-gradient(#F6F8FB,#C3D6E8);border-left:1px solid #7E92A8"></div>
<svg style="position:absolute;left:339px;top:250px" width="10" height="6"><path d="M0 0H10L5 5z" fill="#222"/></svg>
<div class="t" style="left:17px;top:271px;font-size:12px;color:#222;">Sales Person</div>
<div style="position:absolute;left:99px;top:268px;width:255px;height:24px;background:#EEEEEE;border:1px solid #7E92A8;box-shadow:inset 1px 1px #D0DEEC"></div>
<div class="t" style="left:102px;top:273px;font-size:12px;color:#111;">Mantra M Mantra</div>
<div style="left:316px;top:270px;width:18px;height:18px"><svg width="18" height="18" viewBox="0 0 18 18"><defs><radialGradient id="lg" cx="40%" cy="35%" r="65%"><stop offset="0" stop-color="#FFFFFF"/><stop offset="1" stop-color="#A6D6F2"/></radialGradient></defs><path d="M10.8 10.8L15.2 15.2" stroke="#6A5A50" stroke-width="3.4" stroke-linecap="round"/><path d="M10.8 10.8L15.2 15.2" stroke="#F4A444" stroke-width="2" stroke-linecap="round"/><circle cx="7" cy="7" r="5" fill="url(#lg)" stroke="#6E7E90" stroke-width="1.3"/></svg></div>
<div style="position:absolute;left:333px;top:269px;width:20px;height:22px;background:linear-gradient(#F6F8FB,#C3D6E8);border-left:1px solid #7E92A8"></div>
<svg style="position:absolute;left:339px;top:278px" width="10" height="6"><path d="M0 0H10L5 5z" fill="#222"/></svg>
<div class="t" style="left:17px;top:299px;font-size:12px;color:#222;">Labor Planner</div>
<div style="position:absolute;left:99px;top:296px;width:255px;height:24px;background:#FFFFFF;border:1px solid #000"></div>
<div style="left:335px;top:298px;width:18px;height:18px"><svg width="18" height="18" viewBox="0 0 18 18"><defs><radialGradient id="lg" cx="40%" cy="35%" r="65%"><stop offset="0" stop-color="#FFFFFF"/><stop offset="1" stop-color="#A6D6F2"/></radialGradient></defs><path d="M10.8 10.8L15.2 15.2" stroke="#6A5A50" stroke-width="3.4" stroke-linecap="round"/><path d="M10.8 10.8L15.2 15.2" stroke="#F4A444" stroke-width="2" stroke-linecap="round"/><circle cx="7" cy="7" r="5" fill="url(#lg)" stroke="#6E7E90" stroke-width="1.3"/></svg></div>
<div style="position:absolute;left:366px;top:131px;width:215px;height:98px;border:1px solid #B8B8B8"></div>
<div style="position:absolute;left:371px;top:126px;width:94px;height:12px;background:#fff"></div>
<div class="t" style="left:373px;top:126px;font-size:12px;font-weight:bold;color:#111">Charge Duration</div>
<div class="t" style="left:369px;top:144px;font-size:12px;color:#222;">Start Date/Time</div>
<div style="position:absolute;left:458px;top:141px;width:120px;height:24px;background:#EEEEEE;border:1px solid #848484"></div>
<div class="t" style="left:460px;top:147px;font-size:12px;color:#111;">24/04/2018</div>
<div class="t" style="left:369px;top:173px;font-size:12px;color:#222;">End Date/Time</div>
<div style="position:absolute;left:458px;top:170px;width:120px;height:24px;background:#EEEEEE;border:1px solid #848484"></div>
<div class="t" style="left:460px;top:176px;font-size:12px;color:#111;">24/04/2018</div>
<div class="t" style="left:369px;top:202px;font-size:12px;color:#222;">Duration</div>
<div style="position:absolute;left:458px;top:199px;width:85px;height:24px;background:#EEEEEE;border:1px solid #848484"></div>
<div class="t" style="left:460px;top:205px;font-size:12px;color:#111;">0d</div>
<div class="t" style="left:588px;top:131px;font-size:12px;color:#222;">Conv. Date</div>
<div style="position:absolute;left:655px;top:126px;width:89px;height:24px;background:#EEEEEE;border:1px solid #848484"></div>
<div style="left:590px;top:161px;width:12px;height:12px;border:1px solid #6B7E92;box-shadow:inset 1px 1px #fff;background:linear-gradient(135deg,#FFFFFF 25%,#F7A870 100%);"><svg style="position:absolute;left:-1px;top:-1px" width="12" height="12"><path d="M2.6 5.6 L4.2 5.4 L4.7 7.4 L9.6 2.6 L10.6 3.4 L4.8 10.2 L3.2 10.2Z" fill="#111"/></svg></div>
<div class="t" style="left:606px;top:160px;font-size:12px;color:#222;">Show Suggestions</div>
<div style="left:590px;top:181px;width:12px;height:12px;border:1px solid #6B7E92;box-shadow:inset 1px 1px #fff;background:linear-gradient(135deg,#FFFFFF 25%,#F7A870 100%);"></div>
<div class="t" style="left:606px;top:180px;font-size:12px;color:#222;">Event Pricing</div>
<div style="left:590px;top:201px;width:12px;height:12px;border:1px solid #6B7E92;box-shadow:inset 1px 1px #fff;background:linear-gradient(135deg,#FFFFFF 25%,#F7A870 100%);opacity:0.45;"></div>
<div class="t" style="left:606px;top:200px;font-size:12px;color:#222;color:#A8A8A8">Day-Week-Month Pricing</div>
<div class="t" style="left:362px;top:241px;font-size:12px;color:#222;">Customer</div>
<div style="position:absolute;left:421px;top:237px;width:160px;height:24px;background:#EEEEEE;border:1px solid #848484"></div>
<div class="t" style="left:423px;top:242px;font-size:12px;color:#111;">Cross Domain Pvt Ltd</div>
<div style="left:562px;top:239px;width:18px;height:18px"><svg width="18" height="18" viewBox="0 0 18 18"><path d="M10.5 10.5L15.5 15.5" stroke="#B5B5B5" stroke-width="3" stroke-linecap="round"/><circle cx="7" cy="7" r="5.2" fill="#F4F4F4" stroke="#B8B8B8" stroke-width="1.4"/></svg></div>
<div class="t" style="left:362px;top:270px;font-size:12px;color:#222;">Contact</div>
<div style="position:absolute;left:421px;top:265px;width:160px;height:24px;background:#EEEEEE;border:1px solid #848484"></div>
<div class="t" style="left:423px;top:271px;font-size:12px;color:#111;">Harsha</div>
<div style="left:562px;top:267px;width:18px;height:18px"><svg width="18" height="18" viewBox="0 0 18 18"><path d="M10.5 10.5L15.5 15.5" stroke="#B5B5B5" stroke-width="3" stroke-linecap="round"/><circle cx="7" cy="7" r="5.2" fill="#F4F4F4" stroke="#B8B8B8" stroke-width="1.4"/></svg></div>
<div class="t" style="left:362px;top:298px;font-size:12px;color:#222;">Contact Tel #</div>
<div style="position:absolute;left:452px;top:294px;width:128px;height:24px;background:#EEEEEE;border:1px solid #848484"></div>
<div class="t" style="left:587px;top:241px;font-size:12px;color:#222;">Bill To</div>
<div style="position:absolute;left:654px;top:237px;width:160px;height:24px;background:#EEEEEE;border:1px solid #848484"></div>
<div class="t" style="left:655px;top:242px;font-size:12px;color:#111;">MB#1</div>
<div style="left:795px;top:239px;width:18px;height:18px"><svg width="18" height="18" viewBox="0 0 18 18"><path d="M10.5 10.5L15.5 15.5" stroke="#B5B5B5" stroke-width="3" stroke-linecap="round"/><circle cx="7" cy="7" r="5.2" fill="#F4F4F4" stroke="#B8B8B8" stroke-width="1.4"/></svg></div>
<div class="t" style="left:587px;top:270px;font-size:12px;color:#222;">Bill Contact</div>
<div style="position:absolute;left:654px;top:265px;width:160px;height:24px;background:#EEEEEE;border:1px solid #848484"></div>
<div class="t" style="left:655px;top:271px;font-size:12px;color:#111;">SHEETAL INGALE</div>
<div style="left:795px;top:267px;width:18px;height:18px"><svg width="18" height="18" viewBox="0 0 18 18"><path d="M10.5 10.5L15.5 15.5" stroke="#B5B5B5" stroke-width="3" stroke-linecap="round"/><circle cx="7" cy="7" r="5.2" fill="#F4F4F4" stroke="#B8B8B8" stroke-width="1.4"/></svg></div>
<div class="t" style="left:587px;top:298px;font-size:12px;color:#222;">Language</div>
<div style="position:absolute;left:654px;top:294px;width:90px;height:24px;background:#EEEEEE;border:1px solid #848484"></div>
<div style="left:725px;top:296px;width:18px;height:18px"><svg width="18" height="18" viewBox="0 0 18 18"><defs><radialGradient id="lg" cx="40%" cy="35%" r="65%"><stop offset="0" stop-color="#FFFFFF"/><stop offset="1" stop-color="#A6D6F2"/></radialGradient></defs><path d="M10.8 10.8L15.2 15.2" stroke="#6A5A50" stroke-width="3.4" stroke-linecap="round"/><path d="M10.8 10.8L15.2 15.2" stroke="#F4A444" stroke-width="2" stroke-linecap="round"/><circle cx="7" cy="7" r="5" fill="url(#lg)" stroke="#6E7E90" stroke-width="1.3"/></svg></div>
<div style="position:absolute;left:752px;top:148px;width:290px;height:83px;background:#C6DCF1;border-top:1px solid #5A82C6;border-left:1px solid #5A82C6;border-right:1px solid #7189AC;border-bottom:1px solid #7189AC"></div>
<div style="position:absolute;left:753px;top:149px;width:288px;height:1px;background:#fff"></div>
<div style="position:absolute;left:753px;top:149px;width:1px;height:81px;background:#fff"></div>
<div style="position:absolute;left:754px;top:152px;width:284px;height:75px;background:#fff;border:1px solid #A5A5A5"></div>
<svg style="position:absolute;left:0;top:0" width="1188" height="150"><path d="M755 148 V132 L760 127 H843 V148Z" fill="#C44B2C"/><path d="M755.5 148 V132.5 L760.5 127.5 H843" fill="none" stroke="#FFFFFF" stroke-width="1"/><path d="M754.5 148 V132 L760 126.5 H843.5 V148" fill="none" stroke="#5A82C6" stroke-width="1"/><rect x="755" y="148" width="88" height="1" fill="#C6DCF1"/><path d="M844 148 V132 L849 127 H963 V148Z" fill="#FC9B4A"/><path d="M844.5 148 V132.5 L849.5 127.5 H963" fill="none" stroke="#FFFFFF" stroke-width="1"/><path d="M843.5 148 V132 L849 126.5 H963.5 V148" fill="none" stroke="#728599" stroke-width="1"/></svg>
<div class="t" style="left:759px;top:131px;font-size:12px;font-weight:bold;color:#fff">Comments</div>
<div class="t" style="left:849px;top:131px;font-size:12px;color:#000">LaborComments</div>
<div style="position:absolute;left:761px;top:154px;width:269px;height:69px;background:#EEEEEE;border:1px solid #6B7B8B;box-shadow:inset 1px 1px #7C7C7C,inset -1px -1px #7C7C7C"></div>
<div style="left:1010px;top:156px;width:18px;height:18px"><svg width="18" height="18" viewBox="0 0 18 18"><defs><radialGradient id="lg" cx="40%" cy="35%" r="65%"><stop offset="0" stop-color="#FFFFFF"/><stop offset="1" stop-color="#A6D6F2"/></radialGradient></defs><path d="M10.8 10.8L15.2 15.2" stroke="#6A5A50" stroke-width="3.4" stroke-linecap="round"/><path d="M10.8 10.8L15.2 15.2" stroke="#F4A444" stroke-width="2" stroke-linecap="round"/><circle cx="7" cy="7" r="5" fill="url(#lg)" stroke="#6E7E90" stroke-width="1.3"/></svg></div>
<div class="t" style="left:826px;top:248px;font-size:12px;color:#222;">Document Folder:</div>
<div style="position:absolute;left:1014px;top:240px;width:49px;height:23px;border:1px solid #A8A8A8;background:#fff"></div>
<div style="position:absolute;left:1024px;top:242px;width:30px;height:20px;border:1px solid #6E6464;border-radius:2px;background:#fff"></div>
<div class="t" style="left:1025px;top:245px;font-size:10.5px;font-weight:bold;color:#000;letter-spacing:-0.3px">Reset</div>
<div style="position:absolute;left:827px;top:264px;width:215px;height:49px;background:#EEEEEE;border:1px solid #6B7B8B;box-shadow:inset 1px 1px #7C7C7C,inset -1px -1px #7C7C7C"></div>
<div style="position:absolute;left:8px;top:356px;width:1172px;height:315px;background:#C6DCF1;border-top:1px solid #5A82C6;border-left:1px solid #5A82C6;border-right:1px solid #7189AC;border-bottom:1px solid #7189AC"></div>
<div style="position:absolute;left:9px;top:357px;width:1170px;height:1px;background:#fff"></div>
<svg style="position:absolute;left:0;top:0" width="1188" height="358"><path d="M11 356 V340 L16 335 H76 V356Z" fill="#C44B2C"/><path d="M11.5 356 V340.5 L16.5 335.5 H76" fill="none" stroke="#FFFFFF" stroke-width="1"/><path d="M10.5 356 V340 L16 334.5 H76.5 V356" fill="none" stroke="#5A82C6" stroke-width="1"/><rect x="11" y="356" width="65" height="1" fill="#C6DCF1"/><path d="M77 356 V340 L82 335 H134 V356Z" fill="#FC9B4A"/><path d="M77.5 356 V340.5 L82.5 335.5 H134" fill="none" stroke="#FFFFFF" stroke-width="1"/><path d="M76.5 356 V340 L82 334.5 H134.5 V356" fill="none" stroke="#728599" stroke-width="1"/></svg>
<div class="t" style="left:15px;top:339px;font-size:12px;font-weight:bold;color:#fff">Item(s)</div>
<div class="t" style="left:82px;top:339px;font-size:12px;color:#000">Labor</div>
<div style="position:absolute;left:10px;top:360px;width:1166px;height:34px;border:1px solid #A5A5A5;background:#fff"></div>
<div class="t" style="left:45px;top:369px;font-size:12px;color:#222">Search :</div>
<div class="t" style="left:120px;top:369px;font-size:12px;color:#222">Asset</div>
<div style="position:absolute;left:162px;top:365px;width:120px;height:24px;background:#FFFFFF;border:1px solid #000"></div>
<div class="t" style="left:362px;top:369px;font-size:12px;color:#222">Product</div>
<div style="position:absolute;left:412px;top:365px;width:195px;height:24px;background:#FFFFFF;border:1px solid #000"></div>
<div class="t" style="left:625px;top:369px;font-size:12px;color:#222">Qty</div>
<div style="position:absolute;left:647px;top:365px;width:40px;height:24px;background:#FFFFFF;border:1px solid #000"></div>
<div class="t" style="left:648px;top:371px;font-size:12px;color:#111;">1</div>
<div style="left:707px;top:371px;width:12px;height:12px;border:1px solid #6B7E92;box-shadow:inset 1px 1px #fff;background:linear-gradient(135deg,#FFFFFF 25%,#F7A870 100%);"></div>
<div class="t" style="left:724px;top:371px;font-size:12px;color:#222">Update existing lines</div>
<div style="position:absolute;left:10px;top:395px;width:1166px;height:272px;border:1px solid #A8A8A8;background:#fff"></div>
<div style="position:absolute;left:12px;top:397px;width:1162px;height:268px;border:1px solid #7A8A9C"></div>
<div style="left:13px;top:398px;width:1143px;height:248px;overflow:hidden;font-size:12px;color:#000"><div style="left:0;top:0;width:1143px;height:20px;background:#C44B2C"></div><div style="left:0px;top:0;width:15px;height:20px;border:1px solid;border-color:#8E3B23 #FF7443 #FF7443 #8E3B23;box-shadow:inset 1px 1px #FF7443,inset -1px -1px #8E3B23;background:#C44B2C"></div><div class="t" style="left:0px;top:4px;width:15px;text-align:center;color:#FFFDF0;font-size:12px;overflow:hidden">T</div><div style="left:15px;top:0;width:15px;height:20px;border:1px solid;border-color:#8E3B23 #FF7443 #FF7443 #8E3B23;box-shadow:inset 1px 1px #FF7443,inset -1px -1px #8E3B23;background:#C44B2C"></div><div class="t" style="left:15px;top:4px;width:15px;text-align:center;color:#FFFDF0;font-size:12px;overflow:hidden">C</div><div style="left:30px;top:0;width:15px;height:20px;border:1px solid;border-color:#8E3B23 #FF7443 #FF7443 #8E3B23;box-shadow:inset 1px 1px #FF7443,inset -1px -1px #8E3B23;background:#C44B2C"></div><div class="t" style="left:30px;top:4px;width:15px;text-align:center;color:#FFFDF0;font-size:12px;overflow:hidden">X</div><div style="left:45px;top:0;width:15px;height:20px;border:1px solid;border-color:#8E3B23 #FF7443 #FF7443 #8E3B23;box-shadow:inset 1px 1px #FF7443,inset -1px -1px #8E3B23;background:#C44B2C"></div><div class="t" style="left:45px;top:4px;width:15px;text-align:center;color:#FFFDF0;font-size:12px;overflow:hidden">M</div><div style="left:60px;top:0;width:15px;height:20px;border:1px solid;border-color:#8E3B23 #FF7443 #FF7443 #8E3B23;box-shadow:inset 1px 1px #FF7443,inset -1px -1px #8E3B23;background:#C44B2C"></div><div class="t" style="left:60px;top:4px;width:15px;text-align:center;color:#FFFDF0;font-size:12px;overflow:hidden">S</div><div style="left:75px;top:0;width:20px;height:20px;border:1px solid;border-color:#8E3B23 #FF7443 #FF7443 #8E3B23;box-shadow:inset 1px 1px #FF7443,inset -1px -1px #8E3B23;background:#C44B2C"></div><div class="t" style="left:75px;top:4px;width:20px;text-align:center;color:#FFFDF0;font-size:12px;overflow:hidden">I.C</div><div style="left:95px;top:0;width:20px;height:20px;border:1px solid;border-color:#8E3B23 #FF7443 #FF7443 #8E3B23;box-shadow:inset 1px 1px #FF7443,inset -1px -1px #8E3B23;background:#C44B2C"></div><div class="t" style="left:95px;top:4px;width:20px;text-align:center;color:#FFFDF0;font-size:12px;overflow:hidden">I....</div><div style="left:115px;top:0;width:20px;height:20px;border:1px solid;border-color:#8E3B23 #FF7443 #FF7443 #8E3B23;box-shadow:inset 1px 1px #FF7443,inset -1px -1px #8E3B23;background:#C44B2C"></div><div class="t" style="left:115px;top:4px;width:20px;text-align:center;color:#FFFDF0;font-size:12px;overflow:hidden">I.I</div><div style="left:135px;top:0;width:75px;height:20px;border:1px solid;border-color:#8E3B23 #FF7443 #FF7443 #8E3B23;box-shadow:inset 1px 1px #FF7443,inset -1px -1px #8E3B23;background:#C44B2C"></div><div class="t" style="left:135px;top:4px;width:75px;text-align:center;color:#FFFDF0;font-size:12px;overflow:hidden">Status</div><div style="left:210px;top:0;width:20px;height:20px;border:1px solid;border-color:#8E3B23 #FF7443 #FF7443 #8E3B23;box-shadow:inset 1px 1px #FF7443,inset -1px -1px #8E3B23;background:#C44B2C"></div><div class="t" style="left:210px;top:4px;width:20px;text-align:center;color:#FFFDF0;font-size:12px;overflow:hidden">L</div><div style="left:230px;top:0;width:45px;height:20px;border:1px solid;border-color:#8E3B23 #FF7443 #FF7443 #8E3B23;box-shadow:inset 1px 1px #FF7443,inset -1px -1px #8E3B23;background:#C44B2C"></div><div class="t" style="left:230px;top:4px;width:45px;text-align:center;color:#FFFDF0;font-size:12px;overflow:hidden">Action</div><div style="left:275px;top:0;width:100px;height:20px;border:1px solid;border-color:#8E3B23 #FF7443 #FF7443 #8E3B23;box-shadow:inset 1px 1px #FF7443,inset -1px -1px #8E3B23;background:#C44B2C"></div><div class="t" style="left:275px;top:4px;width:100px;text-align:center;color:#FFFDF0;font-size:12px;overflow:hidden">Product ID</div><div style="left:375px;top:0;width:260px;height:20px;border:1px solid;border-color:#8E3B23 #FF7443 #FF7443 #8E3B23;box-shadow:inset 1px 1px #FF7443,inset -1px -1px #8E3B23;background:#C44B2C"></div><div class="t" style="left:375px;top:4px;width:260px;text-align:center;color:#FFFDF0;font-size:12px;overflow:hidden">Description</div><div style="left:635px;top:0;width:55px;height:20px;border:1px solid;border-color:#8E3B23 #FF7443 #FF7443 #8E3B23;box-shadow:inset 1px 1px #FF7443,inset -1px -1px #8E3B23;background:#C44B2C"></div><div class="t" style="left:635px;top:4px;width:55px;text-align:center;color:#FFFDF0;font-size:12px;overflow:hidden">Duration</div><div style="left:690px;top:0;width:30px;height:20px;border:1px solid;border-color:#8E3B23 #FF7443 #FF7443 #8E3B23;box-shadow:inset 1px 1px #FF7443,inset -1px -1px #8E3B23;background:#C44B2C"></div><div class="t" style="left:690px;top:4px;width:30px;text-align:center;color:#FFFDF0;font-size:12px;overflow:hidden">DIW</div><div style="left:720px;top:0;width:50px;height:20px;border:1px solid;border-color:#8E3B23 #FF7443 #FF7443 #8E3B23;box-shadow:inset 1px 1px #FF7443,inset -1px -1px #8E3B23;background:#C44B2C"></div><div class="t" style="left:720px;top:4px;width:50px;text-align:center;color:#FFFDF0;font-size:12px;overflow:hidden">DIM</div><div style="left:770px;top:0;width:30px;height:20px;border:1px solid;border-color:#8E3B23 #FF7443 #FF7443 #8E3B23;box-shadow:inset 1px 1px #FF7443,inset -1px -1px #8E3B23;background:#C44B2C"></div><div class="t" style="left:770px;top:4px;width:30px;text-align:center;color:#FFFDF0;font-size:12px;overflow:hidden">Qty</div><div style="left:800px;top:0;width:40px;height:20px;border:1px solid;border-color:#8E3B23 #FF7443 #FF7443 #8E3B23;box-shadow:inset 1px 1px #FF7443,inset -1px -1px #8E3B23;background:#C44B2C"></div><div class="t" style="left:800px;top:4px;width:40px;text-align:center;color:#FFFDF0;font-size:12px;overflow:hidden">Unit</div><div style="left:840px;top:0;width:60px;height:20px;border:1px solid;border-color:#8E3B23 #FF7443 #FF7443 #8E3B23;box-shadow:inset 1px 1px #FF7443,inset -1px -1px #8E3B23;background:#C44B2C"></div><div class="t" style="left:840px;top:4px;width:60px;text-align:center;color:#FFFDF0;font-size:12px;overflow:hidden">Unit Price</div><div style="left:900px;top:0;width:55px;height:20px;border:1px solid;border-color:#8E3B23 #FF7443 #FF7443 #8E3B23;box-shadow:inset 1px 1px #FF7443,inset -1px -1px #8E3B23;background:#C44B2C"></div><div class="t" style="left:900px;top:4px;width:55px;text-align:center;color:#FFFDF0;font-size:12px;overflow:hidden">Discount</div><div style="left:955px;top:0;width:60px;height:20px;border:1px solid;border-color:#8E3B23 #FF7443 #FF7443 #8E3B23;box-shadow:inset 1px 1px #FF7443,inset -1px -1px #8E3B23;background:#C44B2C"></div><div class="t" style="left:955px;top:4px;width:60px;text-align:center;color:#FFFDF0;font-size:12px;overflow:hidden">Net Each</div><div style="left:1015px;top:0;width:60px;height:20px;border:1px solid;border-color:#8E3B23 #FF7443 #FF7443 #8E3B23;box-shadow:inset 1px 1px #FF7443,inset -1px -1px #8E3B23;background:#C44B2C"></div><div class="t" style="left:1015px;top:4px;width:60px;text-align:center;color:#FFFDF0;font-size:12px;overflow:hidden">Net Disc</div><div style="left:1075px;top:0;width:79px;height:20px;border:1px solid;border-color:#8E3B23 #FF7443 #FF7443 #8E3B23;box-shadow:inset 1px 1px #FF7443,inset -1px -1px #8E3B23;background:#C44B2C"></div><div class="t" style="left:1075px;top:4px;width:79px;text-align:center;color:#FFFDF0;font-size:12px;overflow:hidden">Amount</div><div style="left:0;top:38px;width:1143px;height:1px;background:#C27A45"></div><div style="left:1px;top:23px;width:12px;height:12px;border:1px solid #6B7E92;box-shadow:inset 1px 1px #fff;background:linear-gradient(135deg,#FFFFFF 25%,#F7A870 100%)"><svg style="position:absolute;left:-1px;top:-1px" width="12" height="12"><path d="M2.6 5.6 L4.2 5.4 L4.7 7.4 L9.6 2.6 L10.6 3.4 L4.8 10.2 L3.2 10.2Z" fill="#111"/></svg></div><div style="left:16px;top:23px;width:12px;height:12px;border:1px solid #6B7E92;box-shadow:inset 1px 1px #fff;background:linear-gradient(135deg,#FFFFFF 25%,#F7A870 100%)"></div><div style="left:31px;top:23px;width:12px;height:12px;border:1px solid #6B7E92;box-shadow:inset 1px 1px #fff;background:linear-gradient(135deg,#FFFFFF 25%,#F7A870 100%)"></div><div style="left:46px;top:23px;width:12px;height:12px;border:1px solid #6B7E92;box-shadow:inset 1px 1px #fff;background:linear-gradient(135deg,#FFFFFF 25%,#F7A870 100%)"></div><div style="left:61px;top:23px;width:12px;height:12px;border:1px solid #6B7E92;box-shadow:inset 1px 1px #fff;background:linear-gradient(135deg,#FFFFFF 25%,#F7A870 100%)"></div><div style="left:78px;top:23px;width:12px;height:12px;border:1px solid #6B7E92;box-shadow:inset 1px 1px #fff;background:linear-gradient(135deg,#FFFFFF 25%,#F7A870 100%)"></div><div style="left:98px;top:23px;width:12px;height:12px;border:1px solid #6B7E92;box-shadow:inset 1px 1px #fff;background:linear-gradient(135deg,#FFFFFF 25%,#F7A870 100%)"></div><div style="left:118px;top:23px;width:12px;height:12px;border:1px solid #6B7E92;box-shadow:inset 1px 1px #fff;background:linear-gradient(135deg,#FFFFFF 25%,#F7A870 100%)"></div><div style="left:213px;top:23px;width:12px;height:12px;border:1px solid #6B7E92;box-shadow:inset 1px 1px #fff;background:linear-gradient(135deg,#FFFFFF 25%,#F7A870 100%)"></div><div class="t" style="left:231px;top:23px">SecH...</div><div class="t" style="left:382px;top:23px;font-weight:bold">AUDIO</div><div style="left:0;top:57px;width:1143px;height:1px;background:#C27A45"></div><div style="left:1px;top:42px;width:12px;height:12px;border:1px solid #6B7E92;box-shadow:inset 1px 1px #fff;background:linear-gradient(135deg,#FFFFFF 25%,#F7A870 100%)"><svg style="position:absolute;left:-1px;top:-1px" width="12" height="12"><path d="M2.6 5.6 L4.2 5.4 L4.7 7.4 L9.6 2.6 L10.6 3.4 L4.8 10.2 L3.2 10.2Z" fill="#111"/></svg></div><div style="left:16px;top:42px;width:12px;height:12px;border:1px solid #6B7E92;box-shadow:inset 1px 1px #fff;background:linear-gradient(135deg,#FFFFFF 25%,#F7A870 100%)"></div><div style="left:31px;top:42px;width:12px;height:12px;border:1px solid #6B7E92;box-shadow:inset 1px 1px #fff;background:linear-gradient(135deg,#FFFFFF 25%,#F7A870 100%)"></div><div style="left:46px;top:42px;width:12px;height:12px;border:1px solid #6B7E92;box-shadow:inset 1px 1px #fff;background:linear-gradient(135deg,#FFFFFF 25%,#F7A870 100%)"></div><div style="left:61px;top:42px;width:12px;height:12px;border:1px solid #6B7E92;box-shadow:inset 1px 1px #fff;background:linear-gradient(135deg,#FFFFFF 25%,#F7A870 100%)"></div><div style="left:78px;top:42px;width:12px;height:12px;border:1px solid #6B7E92;box-shadow:inset 1px 1px #fff;background:linear-gradient(135deg,#FFFFFF 25%,#F7A870 100%)"></div><div style="left:98px;top:42px;width:12px;height:12px;border:1px solid #6B7E92;box-shadow:inset 1px 1px #fff;background:linear-gradient(135deg,#FFFFFF 25%,#F7A870 100%)"></div><div style="left:118px;top:42px;width:12px;height:12px;border:1px solid #6B7E92;box-shadow:inset 1px 1px #fff;background:linear-gradient(135deg,#FFFFFF 25%,#F7A870 100%)"></div><div style="left:213px;top:42px;width:12px;height:12px;border:1px solid #6B7E92;box-shadow:inset 1px 1px #fff;background:linear-gradient(135deg,#FFFFFF 25%,#F7A870 100%)"></div><div class="t" style="left:136px;top:42px">Reserved</div><div class="t" style="left:231px;top:42px">Rent</div><div class="t" style="left:276px;top:42px">CAPTIVATE</div><div class="t" style="left:382px;top:42px;">Adobe Captivate</div><div class="t" style="left:636px;top:42px">0d</div><div class="t" style="left:690px;top:42px;width:27px;text-align:right">5.00</div><div class="t" style="left:720px;top:42px;width:47px;text-align:right">20.00</div><div class="t" style="left:770px;top:42px;width:27px;text-align:right">5</div><div class="t" style="left:801px;top:42px">Day</div><div class="t" style="left:840px;top:42px;width:57px;text-align:right">100.00</div><div class="t" style="left:900px;top:42px;width:52px;text-align:right">0.00</div><div class="t" style="left:955px;top:42px;width:57px;text-align:right">0.00</div><div class="t" style="left:1015px;top:42px;width:57px;text-align:right">0.00</div><div class="t" style="left:1075px;top:42px;width:76px;text-align:right">0.00</div><div style="left:0;top:76px;width:1143px;height:1px;background:#C27A45"></div><div style="left:1px;top:61px;width:12px;height:12px;border:1px solid #6B7E92;box-shadow:inset 1px 1px #fff;background:linear-gradient(135deg,#FFFFFF 25%,#F7A870 100%)"><svg style="position:absolute;left:-1px;top:-1px" width="12" height="12"><path d="M2.6 5.6 L4.2 5.4 L4.7 7.4 L9.6 2.6 L10.6 3.4 L4.8 10.2 L3.2 10.2Z" fill="#111"/></svg></div><div style="left:16px;top:61px;width:12px;height:12px;border:1px solid #6B7E92;box-shadow:inset 1px 1px #fff;background:linear-gradient(135deg,#FFFFFF 25%,#F7A870 100%)"></div><div style="left:31px;top:61px;width:12px;height:12px;border:1px solid #6B7E92;box-shadow:inset 1px 1px #fff;background:linear-gradient(135deg,#FFFFFF 25%,#F7A870 100%)"></div><div style="left:46px;top:61px;width:12px;height:12px;border:1px solid #6B7E92;box-shadow:inset 1px 1px #fff;background:linear-gradient(135deg,#FFFFFF 25%,#F7A870 100%)"></div><div style="left:61px;top:61px;width:12px;height:12px;border:1px solid #6B7E92;box-shadow:inset 1px 1px #fff;background:linear-gradient(135deg,#FFFFFF 25%,#F7A870 100%)"></div><div style="left:78px;top:61px;width:12px;height:12px;border:1px solid #6B7E92;box-shadow:inset 1px 1px #fff;background:linear-gradient(135deg,#FFFFFF 25%,#F7A870 100%)"></div><div style="left:98px;top:61px;width:12px;height:12px;border:1px solid #6B7E92;box-shadow:inset 1px 1px #fff;background:linear-gradient(135deg,#FFFFFF 25%,#F7A870 100%)"></div><div style="left:118px;top:61px;width:12px;height:12px;border:1px solid #6B7E92;box-shadow:inset 1px 1px #fff;background:linear-gradient(135deg,#FFFFFF 25%,#F7A870 100%)"></div><div style="left:213px;top:61px;width:12px;height:12px;border:1px solid #6B7E92;box-shadow:inset 1px 1px #fff;background:linear-gradient(135deg,#FFFFFF 25%,#F7A870 100%)"></div><div class="t" style="left:136px;top:61px">Reserved</div><div class="t" style="left:231px;top:61px">Rent</div><div class="t" style="left:276px;top:61px">ILLUSTRATOR</div><div class="t" style="left:382px;top:61px;">Adobe Illustrator</div><div class="t" style="left:636px;top:61px">0d</div><div class="t" style="left:690px;top:61px;width:27px;text-align:right">5.00</div><div class="t" style="left:720px;top:61px;width:47px;text-align:right">20.00</div><div class="t" style="left:770px;top:61px;width:27px;text-align:right">3</div><div class="t" style="left:801px;top:61px">Day</div><div class="t" style="left:840px;top:61px;width:57px;text-align:right">100.00</div><div class="t" style="left:900px;top:61px;width:52px;text-align:right">0.00</div><div class="t" style="left:955px;top:61px;width:57px;text-align:right">0.00</div><div class="t" style="left:1015px;top:61px;width:57px;text-align:right">0.00</div><div class="t" style="left:1075px;top:61px;width:76px;text-align:right">0.00</div><div style="left:0;top:95px;width:1143px;height:1px;background:#C27A45"></div><div style="left:1px;top:80px;width:12px;height:12px;border:1px solid #6B7E92;box-shadow:inset 1px 1px #fff;background:linear-gradient(135deg,#FFFFFF 25%,#F7A870 100%)"><svg style="position:absolute;left:-1px;top:-1px" width="12" height="12"><path d="M2.6 5.6 L4.2 5.4 L4.7 7.4 L9.6 2.6 L10.6 3.4 L4.8 10.2 L3.2 10.2Z" fill="#111"/></svg></div><div style="left:16px;top:80px;width:12px;height:12px;border:1px solid #6B7E92;box-shadow:inset 1px 1px #fff;background:linear-gradient(135deg,#FFFFFF 25%,#F7A870 100%)"></div><div style="left:31px;top:80px;width:12px;height:12px;border:1px solid #6B7E92;box-shadow:inset 1px 1px #fff;background:linear-gradient(135deg,#FFFFFF 25%,#F7A870 100%)"></div><div style="left:46px;top:80px;width:12px;height:12px;border:1px solid #6B7E92;box-shadow:inset 1px 1px #fff;background:linear-gradient(135deg,#FFFFFF 25%,#F7A870 100%)"></div><div style="left:61px;top:80px;width:12px;height:12px;border:1px solid #6B7E92;box-shadow:inset 1px 1px #fff;background:linear-gradient(135deg,#FFFFFF 25%,#F7A870 100%)"></div><div style="left:78px;top:80px;width:12px;height:12px;border:1px solid #6B7E92;box-shadow:inset 1px 1px #fff;background:linear-gradient(135deg,#FFFFFF 25%,#F7A870 100%)"></div><div style="left:98px;top:80px;width:12px;height:12px;border:1px solid #6B7E92;box-shadow:inset 1px 1px #fff;background:linear-gradient(135deg,#FFFFFF 25%,#F7A870 100%)"></div><div style="left:118px;top:80px;width:12px;height:12px;border:1px solid #6B7E92;box-shadow:inset 1px 1px #fff;background:linear-gradient(135deg,#FFFFFF 25%,#F7A870 100%)"></div><div style="left:213px;top:80px;width:12px;height:12px;border:1px solid #6B7E92;box-shadow:inset 1px 1px #fff;background:linear-gradient(135deg,#FFFFFF 25%,#F7A870 100%)"></div><div class="t" style="left:136px;top:80px">Reserved</div><div class="t" style="left:231px;top:80px">Rent</div><div class="t" style="left:276px;top:80px">DREAMWEAVER</div><div class="t" style="left:382px;top:80px;">Adobe Dreamweaver</div><div class="t" style="left:636px;top:80px">0d</div><div class="t" style="left:690px;top:80px;width:27px;text-align:right">5.00</div><div class="t" style="left:720px;top:80px;width:47px;text-align:right">20.00</div><div class="t" style="left:770px;top:80px;width:27px;text-align:right">4</div><div class="t" style="left:801px;top:80px">Day</div><div class="t" style="left:840px;top:80px;width:57px;text-align:right">100.00</div><div class="t" style="left:900px;top:80px;width:52px;text-align:right">0.00</div><div class="t" style="left:955px;top:80px;width:57px;text-align:right">0.00</div><div class="t" style="left:1015px;top:80px;width:57px;text-align:right">0.00</div><div class="t" style="left:1075px;top:80px;width:76px;text-align:right">0.00</div><div style="left:0;top:114px;width:1143px;height:1px;background:#C27A45"></div><div style="left:1px;top:99px;width:12px;height:12px;border:1px solid #6B7E92;box-shadow:inset 1px 1px #fff;background:linear-gradient(135deg,#FFFFFF 25%,#F7A870 100%)"><svg style="position:absolute;left:-1px;top:-1px" width="12" height="12"><path d="M2.6 5.6 L4.2 5.4 L4.7 7.4 L9.6 2.6 L10.6 3.4 L4.8 10.2 L3.2 10.2Z" fill="#111"/></svg></div><div style="left:16px;top:99px;width:12px;height:12px;border:1px solid #6B7E92;box-shadow:inset 1px 1px #fff;background:linear-gradient(135deg,#FFFFFF 25%,#F7A870 100%)"></div><div style="left:31px;top:99px;width:12px;height:12px;border:1px solid #6B7E92;box-shadow:inset 1px 1px #fff;background:linear-gradient(135deg,#FFFFFF 25%,#F7A870 100%)"></div><div style="left:46px;top:99px;width:12px;height:12px;border:1px solid #6B7E92;box-shadow:inset 1px 1px #fff;background:linear-gradient(135deg,#FFFFFF 25%,#F7A870 100%)"></div><div style="left:61px;top:99px;width:12px;height:12px;border:1px solid #6B7E92;box-shadow:inset 1px 1px #fff;background:linear-gradient(135deg,#FFFFFF 25%,#F7A870 100%)"></div><div style="left:78px;top:99px;width:12px;height:12px;border:1px solid #6B7E92;box-shadow:inset 1px 1px #fff;background:linear-gradient(135deg,#FFFFFF 25%,#F7A870 100%)"></div><div style="left:98px;top:99px;width:12px;height:12px;border:1px solid #6B7E92;box-shadow:inset 1px 1px #fff;background:linear-gradient(135deg,#FFFFFF 25%,#F7A870 100%)"></div><div style="left:118px;top:99px;width:12px;height:12px;border:1px solid #6B7E92;box-shadow:inset 1px 1px #fff;background:linear-gradient(135deg,#FFFFFF 25%,#F7A870 100%)"></div><div style="left:213px;top:99px;width:12px;height:12px;border:1px solid #6B7E92;box-shadow:inset 1px 1px #fff;background:linear-gradient(135deg,#FFFFFF 25%,#F7A870 100%)"></div><div class="t" style="left:136px;top:99px">Reserved</div><div class="t" style="left:231px;top:99px">Rent</div><div class="t" style="left:276px;top:99px">PHOTOSHOP</div><div class="t" style="left:382px;top:99px;">Adobe Photoshop</div><div class="t" style="left:636px;top:99px">0d</div><div class="t" style="left:690px;top:99px;width:27px;text-align:right">5.00</div><div class="t" style="left:720px;top:99px;width:47px;text-align:right">20.00</div><div class="t" style="left:770px;top:99px;width:27px;text-align:right">6</div><div class="t" style="left:801px;top:99px">Day</div><div class="t" style="left:840px;top:99px;width:57px;text-align:right">100.00</div><div class="t" style="left:900px;top:99px;width:52px;text-align:right">0.00</div><div class="t" style="left:955px;top:99px;width:57px;text-align:right">0.00</div><div class="t" style="left:1015px;top:99px;width:57px;text-align:right">0.00</div><div class="t" style="left:1075px;top:99px;width:76px;text-align:right">0.00</div><div style="left:0;top:133px;width:1143px;height:1px;background:#C27A45"></div><div style="left:1px;top:118px;width:12px;height:12px;border:1px solid #6B7E92;box-shadow:inset 1px 1px #fff;background:linear-gradient(135deg,#FFFFFF 25%,#F7A870 100%)"><svg style="position:absolute;left:-1px;top:-1px" width="12" height="12"><path d="M2.6 5.6 L4.2 5.4 L4.7 7.4 L9.6 2.6 L10.6 3.4 L4.8 10.2 L3.2 10.2Z" fill="#111"/></svg></div><div style="left:16px;top:118px;width:12px;height:12px;border:1px solid #6B7E92;box-shadow:inset 1px 1px #fff;background:linear-gradient(135deg,#FFFFFF 25%,#F7A870 100%)"></div><div style="left:31px;top:118px;width:12px;height:12px;border:1px solid #6B7E92;box-shadow:inset 1px 1px #fff;background:linear-gradient(135deg,#FFFFFF 25%,#F7A870 100%)"></div><div style="left:46px;top:118px;width:12px;height:12px;border:1px solid #6B7E92;box-shadow:inset 1px 1px #fff;background:linear-gradient(135deg,#FFFFFF 25%,#F7A870 100%)"></div><div style="left:61px;top:118px;width:12px;height:12px;border:1px solid #6B7E92;box-shadow:inset 1px 1px #fff;background:linear-gradient(135deg,#FFFFFF 25%,#F7A870 100%)"></div><div style="left:78px;top:118px;width:12px;height:12px;border:1px solid #6B7E92;box-shadow:inset 1px 1px #fff;background:linear-gradient(135deg,#FFFFFF 25%,#F7A870 100%)"></div><div style="left:98px;top:118px;width:12px;height:12px;border:1px solid #6B7E92;box-shadow:inset 1px 1px #fff;background:linear-gradient(135deg,#FFFFFF 25%,#F7A870 100%)"></div><div style="left:118px;top:118px;width:12px;height:12px;border:1px solid #6B7E92;box-shadow:inset 1px 1px #fff;background:linear-gradient(135deg,#FFFFFF 25%,#F7A870 100%)"></div><div style="left:213px;top:118px;width:12px;height:12px;border:1px solid #6B7E92;box-shadow:inset 1px 1px #fff;background:linear-gradient(135deg,#FFFFFF 25%,#F7A870 100%)"></div><div class="t" style="left:136px;top:118px">Reserved</div><div class="t" style="left:231px;top:118px">Rent</div><div class="t" style="left:276px;top:118px">DIMENSION</div><div class="t" style="left:382px;top:118px;">Adobe Dimension</div><div class="t" style="left:636px;top:118px">0d</div><div class="t" style="left:690px;top:118px;width:27px;text-align:right">5.00</div><div class="t" style="left:720px;top:118px;width:47px;text-align:right">20.00</div><div class="t" style="left:770px;top:118px;width:27px;text-align:right">4</div><div class="t" style="left:801px;top:118px">Day</div><div class="t" style="left:840px;top:118px;width:57px;text-align:right">100.00</div><div class="t" style="left:900px;top:118px;width:52px;text-align:right">0.00</div><div class="t" style="left:955px;top:118px;width:57px;text-align:right">0.00</div><div class="t" style="left:1015px;top:118px;width:57px;text-align:right">0.00</div><div class="t" style="left:1075px;top:118px;width:76px;text-align:right">0.00</div><div style="left:0;top:152px;width:1143px;height:1px;background:#C27A45"></div><div style="left:1px;top:137px;width:12px;height:12px;border:1px solid #6B7E92;box-shadow:inset 1px 1px #fff;background:linear-gradient(135deg,#FFFFFF 25%,#F7A870 100%)"><svg style="position:absolute;left:-1px;top:-1px" width="12" height="12"><path d="M2.6 5.6 L4.2 5.4 L4.7 7.4 L9.6 2.6 L10.6 3.4 L4.8 10.2 L3.2 10.2Z" fill="#111"/></svg></div><div style="left:16px;top:137px;width:12px;height:12px;border:1px solid #6B7E92;box-shadow:inset 1px 1px #fff;background:linear-gradient(135deg,#FFFFFF 25%,#F7A870 100%)"></div><div style="left:31px;top:137px;width:12px;height:12px;border:1px solid #6B7E92;box-shadow:inset 1px 1px #fff;background:linear-gradient(135deg,#FFFFFF 25%,#F7A870 100%)"></div><div style="left:46px;top:137px;width:12px;height:12px;border:1px solid #6B7E92;box-shadow:inset 1px 1px #fff;background:linear-gradient(135deg,#FFFFFF 25%,#F7A870 100%)"></div><div style="left:61px;top:137px;width:12px;height:12px;border:1px solid #6B7E92;box-shadow:inset 1px 1px #fff;background:linear-gradient(135deg,#FFFFFF 25%,#F7A870 100%)"></div><div style="left:78px;top:137px;width:12px;height:12px;border:1px solid #6B7E92;box-shadow:inset 1px 1px #fff;background:linear-gradient(135deg,#FFFFFF 25%,#F7A870 100%)"></div><div style="left:98px;top:137px;width:12px;height:12px;border:1px solid #6B7E92;box-shadow:inset 1px 1px #fff;background:linear-gradient(135deg,#FFFFFF 25%,#F7A870 100%)"></div><div style="left:118px;top:137px;width:12px;height:12px;border:1px solid #6B7E92;box-shadow:inset 1px 1px #fff;background:linear-gradient(135deg,#FFFFFF 25%,#F7A870 100%)"></div><div style="left:213px;top:137px;width:12px;height:12px;border:1px solid #6B7E92;box-shadow:inset 1px 1px #fff;background:linear-gradient(135deg,#FFFFFF 25%,#F7A870 100%)"></div><div class="t" style="left:136px;top:137px">Reserved</div><div class="t" style="left:231px;top:137px">Rent</div><div class="t" style="left:276px;top:137px">INDESIGN</div><div class="t" style="left:382px;top:137px;">Adobe Indesign</div><div class="t" style="left:636px;top:137px">0d</div><div class="t" style="left:690px;top:137px;width:27px;text-align:right">5.00</div><div class="t" style="left:720px;top:137px;width:47px;text-align:right">20.00</div><div class="t" style="left:770px;top:137px;width:27px;text-align:right">8</div><div class="t" style="left:801px;top:137px">Day</div><div class="t" style="left:840px;top:137px;width:57px;text-align:right">100.00</div><div class="t" style="left:900px;top:137px;width:52px;text-align:right">0.00</div><div class="t" style="left:955px;top:137px;width:57px;text-align:right">0.00</div><div class="t" style="left:1015px;top:137px;width:57px;text-align:right">0.00</div><div class="t" style="left:1075px;top:137px;width:76px;text-align:right">0.00</div><div style="left:0;top:171px;width:1143px;height:1px;background:#C27A45"></div><div style="left:1px;top:156px;width:12px;height:12px;border:1px solid #6B7E92;box-shadow:inset 1px 1px #fff;background:linear-gradient(135deg,#FFFFFF 25%,#F7A870 100%)"><svg style="position:absolute;left:-1px;top:-1px" width="12" height="12"><path d="M2.6 5.6 L4.2 5.4 L4.7 7.4 L9.6 2.6 L10.6 3.4 L4.8 10.2 L3.2 10.2Z" fill="#111"/></svg></div><div style="left:16px;top:156px;width:12px;height:12px;border:1px solid #6B7E92;box-shadow:inset 1px 1px #fff;background:linear-gradient(135deg,#FFFFFF 25%,#F7A870 100%)"></div><div style="left:31px;top:156px;width:12px;height:12px;border:1px solid #6B7E92;box-shadow:inset 1px 1px #fff;background:linear-gradient(135deg,#FFFFFF 25%,#F7A870 100%)"></div><div style="left:46px;top:156px;width:12px;height:12px;border:1px solid #6B7E92;box-shadow:inset 1px 1px #fff;background:linear-gradient(135deg,#FFFFFF 25%,#F7A870 100%)"></div><div style="left:61px;top:156px;width:12px;height:12px;border:1px solid #6B7E92;box-shadow:inset 1px 1px #fff;background:linear-gradient(135deg,#FFFFFF 25%,#F7A870 100%)"></div><div style="left:78px;top:156px;width:12px;height:12px;border:1px solid #6B7E92;box-shadow:inset 1px 1px #fff;background:linear-gradient(135deg,#FFFFFF 25%,#F7A870 100%)"></div><div style="left:98px;top:156px;width:12px;height:12px;border:1px solid #6B7E92;box-shadow:inset 1px 1px #fff;background:linear-gradient(135deg,#FFFFFF 25%,#F7A870 100%)"></div><div style="left:118px;top:156px;width:12px;height:12px;border:1px solid #6B7E92;box-shadow:inset 1px 1px #fff;background:linear-gradient(135deg,#FFFFFF 25%,#F7A870 100%)"></div><div style="left:213px;top:156px;width:12px;height:12px;border:1px solid #6B7E92;box-shadow:inset 1px 1px #fff;background:linear-gradient(135deg,#FFFFFF 25%,#F7A870 100%)"></div><div class="t" style="left:231px;top:156px">SecT...</div><div class="t" style="left:382px;top:156px;font-weight:bold">Section Total</div><div class="t" style="left:900px;top:156px;width:52px;text-align:right">0.00</div><div class="t" style="left:1075px;top:156px;width:76px;text-align:right">0.00</div><div style="left:0;top:190px;width:1143px;height:1px;background:#C27A45"></div><div style="left:1px;top:175px;width:12px;height:12px;border:1px solid #6B7E92;box-shadow:inset 1px 1px #fff;background:linear-gradient(135deg,#FFFFFF 25%,#F7A870 100%)"><svg style="position:absolute;left:-1px;top:-1px" width="12" height="12"><path d="M2.6 5.6 L4.2 5.4 L4.7 7.4 L9.6 2.6 L10.6 3.4 L4.8 10.2 L3.2 10.2Z" fill="#111"/></svg></div><div style="left:16px;top:175px;width:12px;height:12px;border:1px solid #6B7E92;box-shadow:inset 1px 1px #fff;background:linear-gradient(135deg,#FFFFFF 25%,#F7A870 100%)"></div><div style="left:31px;top:175px;width:12px;height:12px;border:1px solid #6B7E92;box-shadow:inset 1px 1px #fff;background:linear-gradient(135deg,#FFFFFF 25%,#F7A870 100%)"></div><div style="left:46px;top:175px;width:12px;height:12px;border:1px solid #6B7E92;box-shadow:inset 1px 1px #fff;background:linear-gradient(135deg,#FFFFFF 25%,#F7A870 100%)"></div><div style="left:61px;top:175px;width:12px;height:12px;border:1px solid #6B7E92;box-shadow:inset 1px 1px #fff;background:linear-gradient(135deg,#FFFFFF 25%,#F7A870 100%)"></div><div style="left:78px;top:175px;width:12px;height:12px;border:1px solid #6B7E92;box-shadow:inset 1px 1px #fff;background:linear-gradient(135deg,#FFFFFF 25%,#F7A870 100%)"></div><div style="left:98px;top:175px;width:12px;height:12px;border:1px solid #6B7E92;box-shadow:inset 1px 1px #fff;background:linear-gradient(135deg,#FFFFFF 25%,#F7A870 100%)"></div><div style="left:118px;top:175px;width:12px;height:12px;border:1px solid #6B7E92;box-shadow:inset 1px 1px #fff;background:linear-gradient(135deg,#FFFFFF 25%,#F7A870 100%)"></div><div style="left:213px;top:175px;width:12px;height:12px;border:1px solid #6B7E92;box-shadow:inset 1px 1px #fff;background:linear-gradient(135deg,#FFFFFF 25%,#F7A870 100%)"></div><div class="t" style="left:231px;top:175px">SecH...</div><div class="t" style="left:382px;top:175px;font-weight:bold">Externals &amp; Logistics</div><div style="left:0;top:209px;width:1143px;height:1px;background:#C27A45"></div><div style="left:1px;top:194px;width:12px;height:12px;border:1px solid #6B7E92;box-shadow:inset 1px 1px #fff;background:linear-gradient(135deg,#FFFFFF 25%,#F7A870 100%)"><svg style="position:absolute;left:-1px;top:-1px" width="12" height="12"><path d="M2.6 5.6 L4.2 5.4 L4.7 7.4 L9.6 2.6 L10.6 3.4 L4.8 10.2 L3.2 10.2Z" fill="#111"/></svg></div><div style="left:16px;top:194px;width:12px;height:12px;border:1px solid #6B7E92;box-shadow:inset 1px 1px #fff;background:linear-gradient(135deg,#FFFFFF 25%,#F7A870 100%)"></div><div style="left:31px;top:194px;width:12px;height:12px;border:1px solid #6B7E92;box-shadow:inset 1px 1px #fff;background:linear-gradient(135deg,#FFFFFF 25%,#F7A870 100%)"></div><div style="left:46px;top:194px;width:12px;height:12px;border:1px solid #6B7E92;box-shadow:inset 1px 1px #fff;background:linear-gradient(135deg,#FFFFFF 25%,#F7A870 100%)"></div><div style="left:61px;top:194px;width:12px;height:12px;border:1px solid #6B7E92;box-shadow:inset 1px 1px #fff;background:linear-gradient(135deg,#FFFFFF 25%,#F7A870 100%)"></div><div style="left:78px;top:194px;width:12px;height:12px;border:1px solid #6B7E92;box-shadow:inset 1px 1px #fff;background:linear-gradient(135deg,#FFFFFF 25%,#F7A870 100%)"></div><div style="left:98px;top:194px;width:12px;height:12px;border:1px solid #6B7E92;box-shadow:inset 1px 1px #fff;background:linear-gradient(135deg,#FFFFFF 25%,#F7A870 100%)"></div><div style="left:118px;top:194px;width:12px;height:12px;border:1px solid #6B7E92;box-shadow:inset 1px 1px #fff;background:linear-gradient(135deg,#FFFFFF 25%,#F7A870 100%)"></div><div style="left:213px;top:194px;width:12px;height:12px;border:1px solid #6B7E92;box-shadow:inset 1px 1px #fff;background:linear-gradient(135deg,#FFFFFF 25%,#F7A870 100%)"></div><div class="t" style="left:231px;top:194px">Misc.</div><div class="t" style="left:276px;top:194px">LOGISTICS CH...</div><div class="t" style="left:382px;top:194px;">LOGISTICS CHARGES</div><div class="t" style="left:636px;top:194px">0d</div><div class="t" style="left:690px;top:194px;width:27px;text-align:right">5.00</div><div class="t" style="left:770px;top:194px;width:27px;text-align:right">1</div><div class="t" style="left:801px;top:194px">Day</div><div class="t" style="left:840px;top:194px;width:57px;text-align:right">50.00</div><div class="t" style="left:900px;top:194px;width:52px;text-align:right">0.00</div><div class="t" style="left:955px;top:194px;width:57px;text-align:right">0.00</div><div class="t" style="left:1015px;top:194px;width:57px;text-align:right">0.00</div><div class="t" style="left:1075px;top:194px;width:76px;text-align:right">0.00</div><div style="left:0;top:228px;width:1143px;height:1px;background:#C27A45"></div><div style="left:1px;top:213px;width:12px;height:12px;border:1px solid #6B7E92;box-shadow:inset 1px 1px #fff;background:linear-gradient(135deg,#FFFFFF 25%,#F7A870 100%)"><svg style="position:absolute;left:-1px;top:-1px" width="12" height="12"><path d="M2.6 5.6 L4.2 5.4 L4.7 7.4 L9.6 2.6 L10.6 3.4 L4.8 10.2 L3.2 10.2Z" fill="#111"/></svg></div><div style="left:16px;top:213px;width:12px;height:12px;border:1px solid #6B7E92;box-shadow:inset 1px 1px #fff;background:linear-gradient(135deg,#FFFFFF 25%,#F7A870 100%)"></div><div style="left:31px;top:213px;width:12px;height:12px;border:1px solid #6B7E92;box-shadow:inset 1px 1px #fff;background:linear-gradient(135deg,#FFFFFF 25%,#F7A870 100%)"></div><div style="left:46px;top:213px;width:12px;height:12px;border:1px solid #6B7E92;box-shadow:inset 1px 1px #fff;background:linear-gradient(135deg,#FFFFFF 25%,#F7A870 100%)"></div><div style="left:61px;top:213px;width:12px;height:12px;border:1px solid #6B7E92;box-shadow:inset 1px 1px #fff;background:linear-gradient(135deg,#FFFFFF 25%,#F7A870 100%)"></div><div style="left:78px;top:213px;width:12px;height:12px;border:1px solid #6B7E92;box-shadow:inset 1px 1px #fff;background:linear-gradient(135deg,#FFFFFF 25%,#F7A870 100%)"></div><div style="left:98px;top:213px;width:12px;height:12px;border:1px solid #6B7E92;box-shadow:inset 1px 1px #fff;background:linear-gradient(135deg,#FFFFFF 25%,#F7A870 100%)"></div><div style="left:118px;top:213px;width:12px;height:12px;border:1px solid #6B7E92;box-shadow:inset 1px 1px #fff;background:linear-gradient(135deg,#FFFFFF 25%,#F7A870 100%)"></div><div style="left:213px;top:213px;width:12px;height:12px;border:1px solid #6B7E92;box-shadow:inset 1px 1px #fff;background:linear-gradient(135deg,#FFFFFF 25%,#F7A870 100%)"></div><div class="t" style="left:231px;top:213px">Misc.</div><div class="t" style="left:276px;top:213px">10008461</div><div class="t" style="left:382px;top:213px;">Freight Airbag*</div><div class="t" style="left:636px;top:213px">0d</div><div class="t" style="left:690px;top:213px;width:27px;text-align:right">5.00</div><div class="t" style="left:770px;top:213px;width:27px;text-align:right">1</div><div class="t" style="left:801px;top:213px">Day</div><div class="t" style="left:840px;top:213px;width:57px;text-align:right">150.00</div><div class="t" style="left:900px;top:213px;width:52px;text-align:right">0.00</div><div class="t" style="left:955px;top:213px;width:57px;text-align:right">0.00</div><div class="t" style="left:1015px;top:213px;width:57px;text-align:right">0.00</div><div class="t" style="left:1075px;top:213px;width:76px;text-align:right">0.00</div><div style="left:0;top:247px;width:1143px;height:1px;background:#C27A45"></div><div style="left:1px;top:232px;width:12px;height:12px;border:1px solid #6B7E92;box-shadow:inset 1px 1px #fff;background:linear-gradient(135deg,#FFFFFF 25%,#F7A870 100%)"><svg style="position:absolute;left:-1px;top:-1px" width="12" height="12"><path d="M2.6 5.6 L4.2 5.4 L4.7 7.4 L9.6 2.6 L10.6 3.4 L4.8 10.2 L3.2 10.2Z" fill="#111"/></svg></div><div style="left:16px;top:232px;width:12px;height:12px;border:1px solid #6B7E92;box-shadow:inset 1px 1px #fff;background:linear-gradient(135deg,#FFFFFF 25%,#F7A870 100%)"></div><div style="left:31px;top:232px;width:12px;height:12px;border:1px solid #6B7E92;box-shadow:inset 1px 1px #fff;background:linear-gradient(135deg,#FFFFFF 25%,#F7A870 100%)"></div><div style="left:46px;top:232px;width:12px;height:12px;border:1px solid #6B7E92;box-shadow:inset 1px 1px #fff;background:linear-gradient(135deg,#FFFFFF 25%,#F7A870 100%)"></div><div style="left:61px;top:232px;width:12px;height:12px;border:1px solid #6B7E92;box-shadow:inset 1px 1px #fff;background:linear-gradient(135deg,#FFFFFF 25%,#F7A870 100%)"></div><div style="left:78px;top:232px;width:12px;height:12px;border:1px solid #6B7E92;box-shadow:inset 1px 1px #fff;background:linear-gradient(135deg,#FFFFFF 25%,#F7A870 100%)"></div><div style="left:98px;top:232px;width:12px;height:12px;border:1px solid #6B7E92;box-shadow:inset 1px 1px #fff;background:linear-gradient(135deg,#FFFFFF 25%,#F7A870 100%)"></div><div style="left:118px;top:232px;width:12px;height:12px;border:1px solid #6B7E92;box-shadow:inset 1px 1px #fff;background:linear-gradient(135deg,#FFFFFF 25%,#F7A870 100%)"></div><div style="left:213px;top:232px;width:12px;height:12px;border:1px solid #6B7E92;box-shadow:inset 1px 1px #fff;background:linear-gradient(135deg,#FFFFFF 25%,#F7A870 100%)"></div><div class="t" style="left:231px;top:232px">Misc.</div><div class="t" style="left:276px;top:232px">10008459</div><div class="t" style="left:382px;top:232px;">Laundry Charges*</div><div class="t" style="left:636px;top:232px">0d</div><div class="t" style="left:690px;top:232px;width:27px;text-align:right">5.00</div><div class="t" style="left:770px;top:232px;width:27px;text-align:right">1</div><div class="t" style="left:801px;top:232px">Day</div><div class="t" style="left:840px;top:232px;width:57px;text-align:right">100.00</div><div class="t" style="left:900px;top:232px;width:52px;text-align:right">0.00</div><div class="t" style="left:955px;top:232px;width:57px;text-align:right">0.00</div><div class="t" style="left:1015px;top:232px;width:57px;text-align:right">0.00</div><div class="t" style="left:1075px;top:232px;width:76px;text-align:right">0.00</div><div style="left:14px;top:20px;width:1px;height:250px;background:#C27A45"></div><div style="left:29px;top:20px;width:1px;height:250px;background:#C27A45"></div><div style="left:44px;top:20px;width:1px;height:250px;background:#C27A45"></div><div style="left:59px;top:20px;width:1px;height:250px;background:#C27A45"></div><div style="left:74px;top:20px;width:1px;height:250px;background:#C27A45"></div><div style="left:94px;top:20px;width:1px;height:250px;background:#C27A45"></div><div style="left:114px;top:20px;width:1px;height:250px;background:#C27A45"></div><div style="left:134px;top:20px;width:1px;height:250px;background:#C27A45"></div><div style="left:209px;top:20px;width:1px;height:250px;background:#C27A45"></div><div style="left:229px;top:20px;width:1px;height:250px;background:#C27A45"></div><div style="left:274px;top:20px;width:1px;height:250px;background:#C27A45"></div><div style="left:374px;top:20px;width:1px;height:250px;background:#C27A45"></div><div style="left:634px;top:20px;width:1px;height:250px;background:#C27A45"></div><div style="left:689px;top:20px;width:1px;height:250px;background:#C27A45"></div><div style="left:719px;top:20px;width:1px;height:250px;background:#C27A45"></div><div style="left:769px;top:20px;width:1px;height:250px;background:#C27A45"></div><div style="left:799px;top:20px;width:1px;height:250px;background:#C27A45"></div><div style="left:839px;top:20px;width:1px;height:250px;background:#C27A45"></div><div style="left:899px;top:20px;width:1px;height:250px;background:#C27A45"></div><div style="left:954px;top:20px;width:1px;height:250px;background:#C27A45"></div><div style="left:1014px;top:20px;width:1px;height:250px;background:#C27A45"></div><div style="left:1074px;top:20px;width:1px;height:250px;background:#C27A45"></div><div style="left:1153px;top:20px;width:1px;height:250px;background:#C27A45"></div></div>
<div style="position:absolute;left:1156px;top:398px;width:16px;height:19px;background:#EEEEEE"></div>
<div style="position:absolute;left:1156px;top:417px;width:16px;height:230px;background:#E9ECEF;border-left:1px solid #C9D1DC"></div>
<div style="position:absolute;left:1156px;top:418px;width:16px;height:15px;background:#EEEEEE;border:1px solid #7F93A8;border-bottom-color:#C8D4E0"></div>
<svg style="position:absolute;left:1160px;top:423px" width="8" height="5"><path d="M0 4.5H8L4 0z" fill="#222"/></svg>
<div style="position:absolute;left:1156px;top:433px;width:16px;height:183px;background:linear-gradient(90deg,#F4C4A0,#E8955E);border:1px solid #FFC000"></div>
<svg style="position:absolute;left:1160px;top:521px" width="8" height="6"><path d="M0 0.5H8M0 2.5H8M0 4.5H8" stroke="#A06040" stroke-width="1"/></svg>
<div style="position:absolute;left:1156px;top:631px;width:16px;height:15px;background:#EEEEEE;border:1px solid #7F93A8;border-top-color:#C8D4E0"></div>
<svg style="position:absolute;left:1160px;top:636px" width="8" height="5"><path d="M0 0H8L4 4.5z" fill="#222"/></svg>
<div style="position:absolute;left:13px;top:647px;width:1143px;height:16px;background:#E9ECEF;border-top:1px solid #C9D1DC"></div>
<div style="position:absolute;left:13px;top:647px;width:15px;height:16px;background:#EEEEEE;border:1px solid #7F93A8;border-right-color:#C8D4E0"></div>
<svg style="position:absolute;left:18px;top:651px" width="5" height="8"><path d="M4.5 0V8L0 4z" fill="#222"/></svg>
<div style="position:absolute;left:28px;top:647px;width:396px;height:16px;background:linear-gradient(#F4C4A0,#E8955E);border:1px solid #FFC000"></div>
<svg style="position:absolute;left:223px;top:651px" width="6" height="8"><path d="M0.5 0V8M2.5 0V8M4.5 0V8" stroke="#A06040" stroke-width="1"/></svg>
<div style="position:absolute;left:1140px;top:647px;width:16px;height:16px;background:#EEEEEE;border:1px solid #7F93A8;border-left-color:#C8D4E0"></div>
<svg style="position:absolute;left:1146px;top:651px" width="5" height="8"><path d="M0 0V8L4.5 4z" fill="#222"/></svg>
<div style="position:absolute;left:1156px;top:647px;width:17px;height:17px;background:#EEEEEE"></div>
<div class="t" style="left:70px;top:679px;font-size:14px;font-weight:bold;color:#222">Items</div>
<div style="position:absolute;left:120px;top:673px;width:100px;height:24px;background:#EEEEEE;border:1px solid #848484"></div>
<div class="t" style="left:235px;top:679px;font-size:14px;font-weight:bold;color:#222">Labor</div>
<div style="position:absolute;left:287px;top:673px;width:100px;height:24px;background:#EEEEEE;border:1px solid #848484"></div>
<div class="t" style="left:446px;top:679px;font-size:14px;font-weight:bold;color:#222">Sub Total</div>
<div style="position:absolute;left:525px;top:673px;width:100px;height:24px;background:#EEEEEE;border:1px solid #848484"></div>
<div class="t" style="left:636px;top:679px;font-size:14px;font-weight:bold;color:#222">Tax</div>
<div style="position:absolute;left:670px;top:673px;width:100px;height:24px;background:#EEEEEE;border:1px solid #848484"></div>
<div style="position:absolute;left:813px;top:673px;width:89px;height:23px;border:1px solid #C2C2C2;background:#fff"></div>
<div class="t" style="left:814px;top:679px;font-size:14px;font-weight:bold;color:#222;width:89px;text-align:center">Total</div>
<div style="position:absolute;left:906px;top:673px;width:100px;height:24px;background:#EEEEEE;border:1px solid #848484"></div>
<div class="t" style="left:908px;top:677px;font-size:12px;color:#111;font-weight:bold;font-size:14px">0.00</div>
<div style="position:absolute;left:8px;top:707px;width:1171px;height:24px;border:1px solid #C4C4C4;border-top-color:#C8CED4;border-left-color:#C8CED4;box-shadow:inset 1px 1px #7E7E7E;background:#fff"></div></body></html>
